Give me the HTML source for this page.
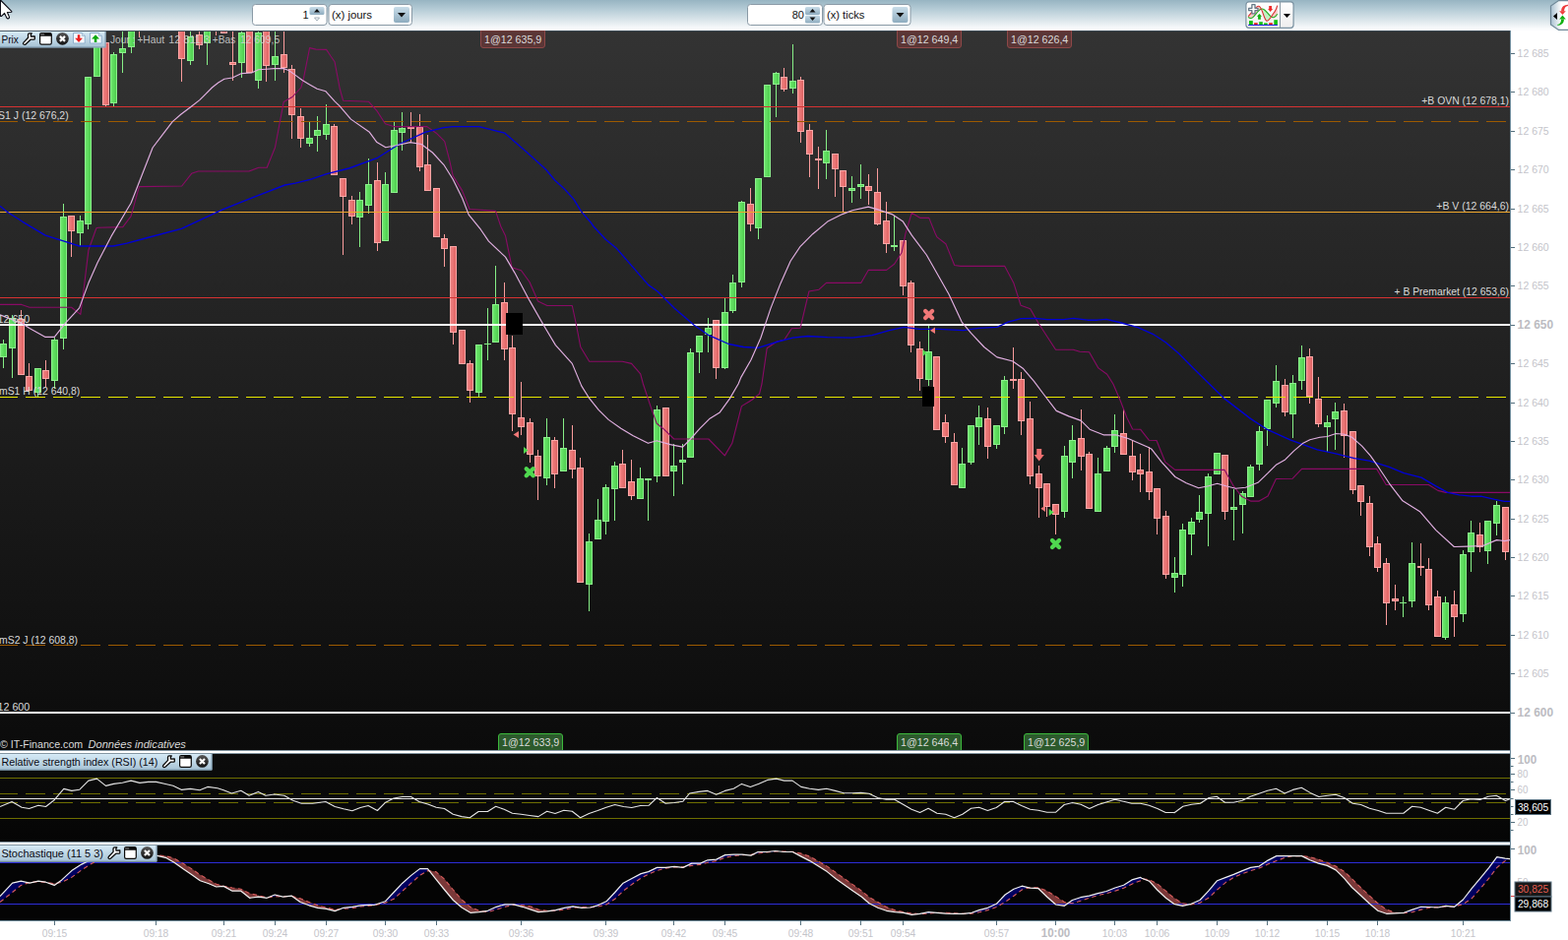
<!DOCTYPE html><html><head><meta charset="utf-8"><title>Chart</title><style>
html,body{margin:0;padding:0;background:#fff;}body{width:1593px;height:955px;overflow:hidden;position:relative;font-family:"Liberation Sans",Arial,sans-serif;}
svg{position:absolute;left:0;top:0;display:block}text{font-family:"Liberation Sans",Arial,sans-serif;font-size:11px}
.ax{fill:#c4c4ca}.axb{fill:#bcbcc2;font-weight:bold;font-size:12px}.lb{fill:#dadada}.hd{fill:#0a0a14}
</style></head><body>
<svg width="1593" height="955" viewBox="0 0 1593 955">
<defs>
<linearGradient id="tb" x1="0" y1="0" x2="0" y2="1"><stop offset="0" stop-color="#97b4c2"/><stop offset="0.33" stop-color="#b8ced8"/><stop offset="0.67" stop-color="#dce6eb"/><stop offset="0.95" stop-color="#fbfcfd"/></linearGradient>
<linearGradient id="bg" x1="0" y1="0" x2="0" y2="1"><stop offset="0" stop-color="#333333"/><stop offset="0.5" stop-color="#1f1f1f"/><stop offset="1" stop-color="#0b0b0b"/></linearGradient>
<linearGradient id="bg2" x1="0" y1="0" x2="0" y2="1"><stop offset="0" stop-color="#0c0c0c"/><stop offset="1" stop-color="#050505"/></linearGradient>
<linearGradient id="hdg" x1="0" y1="0" x2="0" y2="1"><stop offset="0" stop-color="#d6eaf6"/><stop offset="1" stop-color="#a6c2d4"/></linearGradient>
<linearGradient id="btn" x1="0" y1="0" x2="0" y2="1"><stop offset="0" stop-color="#c9dde9"/><stop offset="1" stop-color="#8eacbf"/></linearGradient>
<linearGradient id="gcan" x1="0" y1="0" x2="1" y2="0"><stop offset="0" stop-color="#6ee86e"/><stop offset="1" stop-color="#4ccc4c"/></linearGradient>
<linearGradient id="rcan" x1="0" y1="0" x2="1" y2="0"><stop offset="0" stop-color="#f28484"/><stop offset="1" stop-color="#de6262"/></linearGradient>
<linearGradient id="sph" x1="0" y1="0" x2="0" y2="1"><stop offset="0" stop-color="#5a5a5a"/><stop offset="0.5" stop-color="#303030"/><stop offset="1" stop-color="#141414"/></linearGradient>
<linearGradient id="wb" x1="0" y1="0" x2="0" y2="1"><stop offset="0" stop-color="#ffffff"/><stop offset="1" stop-color="#eeeeee"/></linearGradient>
<linearGradient id="tabg" x1="0" y1="0" x2="1" y2="0"><stop offset="0" stop-color="#a8c0d0"/><stop offset="0.5" stop-color="#ffffff"/><stop offset="1" stop-color="#ffffff"/></linearGradient>
<clipPath id="cp"><rect x="0" y="31" width="1534" height="731"/></clipPath>
<clipPath id="cp3"><rect x="0" y="859" width="1534" height="76"/></clipPath>
<g id="wrench"><path d="M0.8 10.4 L5.6 5.3 L5.5 2.3 Q5.6 0.9 6.9 0.8 L9.3 0.8 L8.4 1.9 L8.4 4 L12.3 3.9 L12.3 6.6 Q12.2 7.1 11.5 7.1 L8.3 7.1 L2.8 12.2 Q1.7 12.8 0.8 11.9 Q0.1 11.1 0.8 10.4 Z" fill="#fff" stroke="#0a0a0a" stroke-width="1.3" stroke-linejoin="round"/></g>
<g id="win"><rect x="0.6" y="0.6" width="11.7" height="11.6" rx="1.6" fill="#fff" stroke="#0a0a0a" stroke-width="1.2"/><path d="M0.6 3.7 V2 Q0.6 0.6 2 0.6 H10.9 Q12.3 0.6 12.3 2 V3.7 Z" fill="#0a0a0a"/><rect x="1.2" y="1" width="4" height="1.6" fill="#777" opacity="0.8"/></g>
<g id="xc"><circle cx="6.45" cy="6.35" r="6.35" fill="url(#sph)"/><path d="M3.9 3.9 L9 8.9 M9 3.9 L3.9 8.9" stroke="#fff" stroke-width="2.2" stroke-linecap="butt"/></g>
<g id="docd"><path d="M0.5 0.5 H9.3 L12.2 3.4 V11 H0.5 Z" fill="#f4f9fd" stroke="#8fb0cc" stroke-width="1"/><path d="M9.3 0.5 V3.4 H12.2" fill="#dbe8f2" stroke="#8fb0cc" stroke-width="0.8"/><path d="M4.8 2.2 H7.3 V5.8 H10 L6.05 10 L2.1 5.8 H4.8 Z" fill="#ee2020"/></g>
<g id="docu"><path d="M0.5 0.5 H9.3 L12.2 3.4 V11 H0.5 Z" fill="#f4f9fd" stroke="#8fb0cc" stroke-width="1"/><path d="M9.3 0.5 V3.4 H12.2" fill="#dbe8f2" stroke="#8fb0cc" stroke-width="0.8"/><path d="M4.8 10 H7.3 V6.4 H10 L6.05 2.2 L2.1 6.4 H4.8 Z" fill="#08a808"/></g>
<g id="xm"><path d="M-3.5 -3.5 L3.5 3.5 M3.5 -3.5 L-3.5 3.5" stroke-width="4.3" stroke-linecap="round" fill="none"/></g>
</defs>
<rect x="0" y="0" width="1593" height="31" fill="url(#tb)"/>
<rect x="0" y="31" width="1535" height="731" fill="url(#bg)"/>
<rect x="0" y="765" width="1535" height="91" fill="url(#bg2)"/>
<rect x="0" y="858" width="1535" height="77" fill="#040404"/>
<g clip-path="url(#cp)">
<rect x="3" y="345" width="1" height="4" fill="#86ee86"/>
<rect x="3" y="363" width="1" height="11" fill="#86ee86"/>
<rect x="0.5" y="349.5" width="6" height="13" fill="url(#gcan)" stroke="#8cf08c" stroke-width="1"/>
<rect x="12" y="320" width="1" height="3" fill="#86ee86"/>
<rect x="12" y="354" width="1" height="30" fill="#86ee86"/>
<rect x="9.5" y="323.5" width="6" height="30" fill="url(#gcan)" stroke="#8cf08c" stroke-width="1"/>
<rect x="21" y="315" width="1" height="9" fill="#fa9c9c"/>
<rect x="18.5" y="324.5" width="6" height="56" fill="url(#rcan)" stroke="#ffa6a6" stroke-width="1"/>
<rect x="29" y="369" width="1" height="13" fill="#fa9c9c"/>
<rect x="26.5" y="382.5" width="6" height="14" fill="url(#rcan)" stroke="#ffa6a6" stroke-width="1"/>
<rect x="38" y="399" width="1" height="4" fill="#86ee86"/>
<rect x="35.5" y="374.5" width="6" height="24" fill="url(#gcan)" stroke="#8cf08c" stroke-width="1"/>
<rect x="46" y="366" width="1" height="10" fill="#fa9c9c"/>
<rect x="46" y="385" width="1" height="8" fill="#fa9c9c"/>
<rect x="43.5" y="376.5" width="6" height="8" fill="url(#rcan)" stroke="#ffa6a6" stroke-width="1"/>
<rect x="55" y="343" width="1" height="2" fill="#86ee86"/>
<rect x="55" y="387" width="1" height="8" fill="#86ee86"/>
<rect x="52.5" y="345.5" width="6" height="41" fill="url(#gcan)" stroke="#8cf08c" stroke-width="1"/>
<rect x="64" y="207" width="1" height="13" fill="#86ee86"/>
<rect x="64" y="344" width="1" height="11" fill="#86ee86"/>
<rect x="61.5" y="220.5" width="6" height="123" fill="url(#gcan)" stroke="#8cf08c" stroke-width="1"/>
<rect x="72" y="235" width="1" height="26" fill="#fa9c9c"/>
<rect x="69.5" y="219.5" width="6" height="15" fill="url(#rcan)" stroke="#ffa6a6" stroke-width="1"/>
<rect x="81" y="219" width="1" height="5" fill="#86ee86"/>
<rect x="81" y="237" width="1" height="13" fill="#86ee86"/>
<rect x="78.5" y="224.5" width="6" height="12" fill="url(#gcan)" stroke="#8cf08c" stroke-width="1"/>
<rect x="89" y="228" width="1" height="5" fill="#86ee86"/>
<rect x="86.5" y="78.5" width="6" height="149" fill="url(#gcan)" stroke="#8cf08c" stroke-width="1"/>
<rect x="95.5" y="25.5" width="6" height="52" fill="url(#gcan)" stroke="#8cf08c" stroke-width="1"/>
<rect x="107" y="107" width="1" height="1" fill="#fa9c9c"/>
<rect x="104.5" y="43.5" width="6" height="63" fill="url(#rcan)" stroke="#ffa6a6" stroke-width="1"/>
<rect x="115" y="53" width="1" height="2" fill="#86ee86"/>
<rect x="115" y="105" width="1" height="3" fill="#86ee86"/>
<rect x="112.5" y="55.5" width="6" height="49" fill="url(#gcan)" stroke="#8cf08c" stroke-width="1"/>
<rect x="124" y="25" width="1" height="24" fill="#86ee86"/>
<rect x="124" y="54" width="1" height="20" fill="#86ee86"/>
<rect x="121.5" y="49.5" width="6" height="4" fill="url(#gcan)" stroke="#8cf08c" stroke-width="1"/>
<rect x="133" y="48" width="1" height="6" fill="#86ee86"/>
<rect x="130.5" y="25.5" width="6" height="22" fill="url(#gcan)" stroke="#8cf08c" stroke-width="1"/>
<rect x="141" y="25" width="1" height="13" fill="#fa9c9c"/>
<rect x="138.5" y="20.5" width="6" height="4" fill="url(#rcan)" stroke="#ffa6a6" stroke-width="1"/>
<rect x="184" y="60" width="1" height="23" fill="#fa9c9c"/>
<rect x="181.5" y="25.5" width="6" height="34" fill="url(#rcan)" stroke="#ffa6a6" stroke-width="1"/>
<rect x="193" y="25" width="1" height="12" fill="#86ee86"/>
<rect x="193" y="62" width="1" height="4" fill="#86ee86"/>
<rect x="190.5" y="37.5" width="6" height="24" fill="url(#gcan)" stroke="#8cf08c" stroke-width="1"/>
<rect x="202" y="25" width="1" height="10" fill="#fa9c9c"/>
<rect x="202" y="46" width="1" height="4" fill="#fa9c9c"/>
<rect x="199.5" y="35.5" width="6" height="10" fill="url(#rcan)" stroke="#ffa6a6" stroke-width="1"/>
<rect x="210" y="44" width="1" height="22" fill="#86ee86"/>
<rect x="207.5" y="25.5" width="6" height="18" fill="url(#gcan)" stroke="#8cf08c" stroke-width="1"/>
<rect x="219" y="25" width="1" height="11" fill="#fa9c9c"/>
<rect x="216.5" y="20.5" width="6" height="4" fill="url(#rcan)" stroke="#ffa6a6" stroke-width="1"/>
<rect x="227" y="25" width="1" height="6" fill="#fa9c9c"/>
<rect x="224.5" y="31.5" width="6" height="2" fill="url(#rcan)" stroke="#ffa6a6" stroke-width="1"/>
<rect x="236" y="25" width="1" height="38" fill="#fa9c9c"/>
<rect x="236" y="66" width="1" height="16" fill="#fa9c9c"/>
<rect x="233.5" y="63.5" width="6" height="2" fill="url(#rcan)" stroke="#ffa6a6" stroke-width="1"/>
<rect x="245" y="25" width="1" height="8" fill="#86ee86"/>
<rect x="245" y="64" width="1" height="15" fill="#86ee86"/>
<rect x="242.5" y="33.5" width="6" height="30" fill="url(#gcan)" stroke="#8cf08c" stroke-width="1"/>
<rect x="250.5" y="25.5" width="6" height="48" fill="url(#rcan)" stroke="#ffa6a6" stroke-width="1"/>
<rect x="262" y="25" width="1" height="8" fill="#86ee86"/>
<rect x="262" y="82" width="1" height="8" fill="#86ee86"/>
<rect x="259.5" y="33.5" width="6" height="48" fill="url(#gcan)" stroke="#8cf08c" stroke-width="1"/>
<rect x="270" y="67" width="1" height="16" fill="#fa9c9c"/>
<rect x="267.5" y="25.5" width="6" height="41" fill="url(#rcan)" stroke="#ffa6a6" stroke-width="1"/>
<rect x="279" y="25" width="1" height="32" fill="#86ee86"/>
<rect x="279" y="66" width="1" height="16" fill="#86ee86"/>
<rect x="276.5" y="57.5" width="6" height="8" fill="url(#gcan)" stroke="#8cf08c" stroke-width="1"/>
<rect x="288" y="25" width="1" height="30" fill="#fa9c9c"/>
<rect x="288" y="69" width="1" height="5" fill="#fa9c9c"/>
<rect x="285.5" y="55.5" width="6" height="13" fill="url(#rcan)" stroke="#ffa6a6" stroke-width="1"/>
<rect x="296" y="66" width="1" height="4" fill="#fa9c9c"/>
<rect x="296" y="117" width="1" height="24" fill="#fa9c9c"/>
<rect x="293.5" y="70.5" width="6" height="46" fill="url(#rcan)" stroke="#ffa6a6" stroke-width="1"/>
<rect x="305" y="110" width="1" height="8" fill="#fa9c9c"/>
<rect x="305" y="141" width="1" height="9" fill="#fa9c9c"/>
<rect x="302.5" y="118.5" width="6" height="22" fill="url(#rcan)" stroke="#ffa6a6" stroke-width="1"/>
<rect x="314" y="124" width="1" height="16" fill="#86ee86"/>
<rect x="314" y="146" width="1" height="3" fill="#86ee86"/>
<rect x="311.5" y="140.5" width="6" height="5" fill="url(#gcan)" stroke="#8cf08c" stroke-width="1"/>
<rect x="322" y="118" width="1" height="14" fill="#86ee86"/>
<rect x="322" y="138" width="1" height="16" fill="#86ee86"/>
<rect x="319.5" y="132.5" width="6" height="5" fill="url(#gcan)" stroke="#8cf08c" stroke-width="1"/>
<rect x="331" y="106" width="1" height="20" fill="#86ee86"/>
<rect x="331" y="137" width="1" height="5" fill="#86ee86"/>
<rect x="328.5" y="126.5" width="6" height="10" fill="url(#gcan)" stroke="#8cf08c" stroke-width="1"/>
<rect x="339" y="126" width="1" height="2" fill="#fa9c9c"/>
<rect x="336.5" y="128.5" width="6" height="49" fill="url(#rcan)" stroke="#ffa6a6" stroke-width="1"/>
<rect x="348" y="200" width="1" height="59" fill="#fa9c9c"/>
<rect x="345.5" y="181.5" width="6" height="18" fill="url(#rcan)" stroke="#ffa6a6" stroke-width="1"/>
<rect x="357" y="199" width="1" height="4" fill="#fa9c9c"/>
<rect x="357" y="220" width="1" height="8" fill="#fa9c9c"/>
<rect x="354.5" y="203.5" width="6" height="16" fill="url(#rcan)" stroke="#ffa6a6" stroke-width="1"/>
<rect x="365" y="195" width="1" height="8" fill="#86ee86"/>
<rect x="365" y="221" width="1" height="30" fill="#86ee86"/>
<rect x="362.5" y="203.5" width="6" height="17" fill="url(#gcan)" stroke="#8cf08c" stroke-width="1"/>
<rect x="374" y="161" width="1" height="26" fill="#86ee86"/>
<rect x="374" y="209" width="1" height="8" fill="#86ee86"/>
<rect x="371.5" y="187.5" width="6" height="21" fill="url(#gcan)" stroke="#8cf08c" stroke-width="1"/>
<rect x="383" y="165" width="1" height="18" fill="#fa9c9c"/>
<rect x="383" y="247" width="1" height="8" fill="#fa9c9c"/>
<rect x="380.5" y="183.5" width="6" height="63" fill="url(#rcan)" stroke="#ffa6a6" stroke-width="1"/>
<rect x="391" y="175" width="1" height="12" fill="#86ee86"/>
<rect x="388.5" y="187.5" width="6" height="57" fill="url(#gcan)" stroke="#8cf08c" stroke-width="1"/>
<rect x="400" y="124" width="1" height="8" fill="#86ee86"/>
<rect x="397.5" y="132.5" width="6" height="63" fill="url(#gcan)" stroke="#8cf08c" stroke-width="1"/>
<rect x="408" y="114" width="1" height="16" fill="#86ee86"/>
<rect x="408" y="135" width="1" height="18" fill="#86ee86"/>
<rect x="405.5" y="130.5" width="6" height="4" fill="url(#gcan)" stroke="#8cf08c" stroke-width="1"/>
<rect x="417" y="114" width="1" height="15" fill="#fa9c9c"/>
<rect x="417" y="131" width="1" height="14" fill="#fa9c9c"/>
<rect x="414" y="129" width="7" height="2" fill="#fa9c9c"/>
<rect x="426" y="116" width="1" height="13" fill="#fa9c9c"/>
<rect x="426" y="170" width="1" height="4" fill="#fa9c9c"/>
<rect x="423.5" y="129.5" width="6" height="40" fill="url(#rcan)" stroke="#ffa6a6" stroke-width="1"/>
<rect x="434" y="137" width="1" height="30" fill="#fa9c9c"/>
<rect x="431.5" y="167.5" width="6" height="26" fill="url(#rcan)" stroke="#ffa6a6" stroke-width="1"/>
<rect x="440.5" y="191.5" width="6" height="49" fill="url(#rcan)" stroke="#ffa6a6" stroke-width="1"/>
<rect x="451" y="238" width="1" height="4" fill="#fa9c9c"/>
<rect x="451" y="253" width="1" height="18" fill="#fa9c9c"/>
<rect x="448.5" y="242.5" width="6" height="10" fill="url(#rcan)" stroke="#ffa6a6" stroke-width="1"/>
<rect x="460" y="338" width="1" height="12" fill="#fa9c9c"/>
<rect x="457.5" y="250.5" width="6" height="87" fill="url(#rcan)" stroke="#ffa6a6" stroke-width="1"/>
<rect x="466.5" y="335.5" width="6" height="34" fill="url(#rcan)" stroke="#ffa6a6" stroke-width="1"/>
<rect x="477" y="366" width="1" height="3" fill="#fa9c9c"/>
<rect x="477" y="397" width="1" height="12" fill="#fa9c9c"/>
<rect x="474.5" y="369.5" width="6" height="27" fill="url(#rcan)" stroke="#ffa6a6" stroke-width="1"/>
<rect x="486" y="399" width="1" height="4" fill="#86ee86"/>
<rect x="483.5" y="350.5" width="6" height="48" fill="url(#gcan)" stroke="#8cf08c" stroke-width="1"/>
<rect x="495" y="313" width="1" height="36" fill="#86ee86"/>
<rect x="495" y="350" width="1" height="16" fill="#86ee86"/>
<rect x="492" y="349" width="7" height="1" fill="#86ee86"/>
<rect x="503" y="270" width="1" height="39" fill="#86ee86"/>
<rect x="500.5" y="309.5" width="6" height="38" fill="url(#gcan)" stroke="#8cf08c" stroke-width="1"/>
<rect x="512" y="287" width="1" height="20" fill="#fa9c9c"/>
<rect x="512" y="355" width="1" height="11" fill="#fa9c9c"/>
<rect x="509.5" y="307.5" width="6" height="47" fill="url(#rcan)" stroke="#ffa6a6" stroke-width="1"/>
<rect x="520" y="341" width="1" height="12" fill="#fa9c9c"/>
<rect x="520" y="421" width="1" height="17" fill="#fa9c9c"/>
<rect x="517.5" y="353.5" width="6" height="67" fill="url(#rcan)" stroke="#ffa6a6" stroke-width="1"/>
<rect x="529" y="388" width="1" height="36" fill="#fa9c9c"/>
<rect x="529" y="434" width="1" height="8" fill="#fa9c9c"/>
<rect x="526.5" y="424.5" width="6" height="9" fill="url(#rcan)" stroke="#ffa6a6" stroke-width="1"/>
<rect x="538" y="425" width="1" height="4" fill="#fa9c9c"/>
<rect x="538" y="462" width="1" height="8" fill="#fa9c9c"/>
<rect x="535.5" y="429.5" width="6" height="32" fill="url(#rcan)" stroke="#ffa6a6" stroke-width="1"/>
<rect x="546" y="457" width="1" height="6" fill="#fa9c9c"/>
<rect x="546" y="484" width="1" height="24" fill="#fa9c9c"/>
<rect x="543.5" y="463.5" width="6" height="20" fill="url(#rcan)" stroke="#ffa6a6" stroke-width="1"/>
<rect x="555" y="425" width="1" height="19" fill="#86ee86"/>
<rect x="555" y="486" width="1" height="7" fill="#86ee86"/>
<rect x="552.5" y="444.5" width="6" height="41" fill="url(#gcan)" stroke="#8cf08c" stroke-width="1"/>
<rect x="563" y="444" width="1" height="3" fill="#fa9c9c"/>
<rect x="563" y="482" width="1" height="14" fill="#fa9c9c"/>
<rect x="560.5" y="447.5" width="6" height="34" fill="url(#rcan)" stroke="#ffa6a6" stroke-width="1"/>
<rect x="572" y="425" width="1" height="30" fill="#86ee86"/>
<rect x="569.5" y="455.5" width="6" height="23" fill="url(#gcan)" stroke="#8cf08c" stroke-width="1"/>
<rect x="581" y="432" width="1" height="25" fill="#fa9c9c"/>
<rect x="581" y="477" width="1" height="9" fill="#fa9c9c"/>
<rect x="578.5" y="457.5" width="6" height="19" fill="url(#rcan)" stroke="#ffa6a6" stroke-width="1"/>
<rect x="589" y="465" width="1" height="10" fill="#fa9c9c"/>
<rect x="586.5" y="475.5" width="6" height="116" fill="url(#rcan)" stroke="#ffa6a6" stroke-width="1"/>
<rect x="598" y="542" width="1" height="8" fill="#86ee86"/>
<rect x="598" y="594" width="1" height="27" fill="#86ee86"/>
<rect x="595.5" y="550.5" width="6" height="43" fill="url(#gcan)" stroke="#8cf08c" stroke-width="1"/>
<rect x="607" y="507" width="1" height="21" fill="#86ee86"/>
<rect x="604.5" y="528.5" width="6" height="19" fill="url(#gcan)" stroke="#8cf08c" stroke-width="1"/>
<rect x="615" y="492" width="1" height="3" fill="#86ee86"/>
<rect x="615" y="530" width="1" height="13" fill="#86ee86"/>
<rect x="612.5" y="495.5" width="6" height="34" fill="url(#gcan)" stroke="#8cf08c" stroke-width="1"/>
<rect x="624" y="469" width="1" height="4" fill="#86ee86"/>
<rect x="624" y="497" width="1" height="32" fill="#86ee86"/>
<rect x="621.5" y="473.5" width="6" height="23" fill="url(#gcan)" stroke="#8cf08c" stroke-width="1"/>
<rect x="632" y="457" width="1" height="14" fill="#fa9c9c"/>
<rect x="629.5" y="471.5" width="6" height="24" fill="url(#rcan)" stroke="#ffa6a6" stroke-width="1"/>
<rect x="641" y="467" width="1" height="22" fill="#fa9c9c"/>
<rect x="641" y="504" width="1" height="4" fill="#fa9c9c"/>
<rect x="638.5" y="489.5" width="6" height="14" fill="url(#rcan)" stroke="#ffa6a6" stroke-width="1"/>
<rect x="650" y="475" width="1" height="11" fill="#86ee86"/>
<rect x="647.5" y="486.5" width="6" height="20" fill="url(#gcan)" stroke="#8cf08c" stroke-width="1"/>
<rect x="658" y="488" width="1" height="41" fill="#86ee86"/>
<rect x="655" y="486" width="7" height="2" fill="#86ee86"/>
<rect x="667" y="412" width="1" height="4" fill="#86ee86"/>
<rect x="667" y="484" width="1" height="6" fill="#86ee86"/>
<rect x="664.5" y="416.5" width="6" height="67" fill="url(#gcan)" stroke="#8cf08c" stroke-width="1"/>
<rect x="673.5" y="414.5" width="6" height="69" fill="url(#rcan)" stroke="#ffa6a6" stroke-width="1"/>
<rect x="684" y="451" width="1" height="22" fill="#86ee86"/>
<rect x="684" y="479" width="1" height="25" fill="#86ee86"/>
<rect x="681.5" y="473.5" width="6" height="5" fill="url(#gcan)" stroke="#8cf08c" stroke-width="1"/>
<rect x="693" y="451" width="1" height="16" fill="#86ee86"/>
<rect x="693" y="470" width="1" height="22" fill="#86ee86"/>
<rect x="690.5" y="467.5" width="6" height="2" fill="url(#gcan)" stroke="#8cf08c" stroke-width="1"/>
<rect x="701" y="354" width="1" height="4" fill="#86ee86"/>
<rect x="698.5" y="358.5" width="6" height="106" fill="url(#gcan)" stroke="#8cf08c" stroke-width="1"/>
<rect x="710" y="358" width="1" height="21" fill="#86ee86"/>
<rect x="707.5" y="341.5" width="6" height="16" fill="url(#gcan)" stroke="#8cf08c" stroke-width="1"/>
<rect x="719" y="323" width="1" height="10" fill="#86ee86"/>
<rect x="719" y="340" width="1" height="18" fill="#86ee86"/>
<rect x="716.5" y="333.5" width="6" height="6" fill="url(#gcan)" stroke="#8cf08c" stroke-width="1"/>
<rect x="727" y="374" width="1" height="11" fill="#fa9c9c"/>
<rect x="724.5" y="325.5" width="6" height="48" fill="url(#rcan)" stroke="#ffa6a6" stroke-width="1"/>
<rect x="736" y="303" width="1" height="14" fill="#86ee86"/>
<rect x="736" y="374" width="1" height="1" fill="#86ee86"/>
<rect x="733.5" y="317.5" width="6" height="56" fill="url(#gcan)" stroke="#8cf08c" stroke-width="1"/>
<rect x="744" y="279" width="1" height="8" fill="#86ee86"/>
<rect x="744" y="316" width="1" height="2" fill="#86ee86"/>
<rect x="741.5" y="287.5" width="6" height="28" fill="url(#gcan)" stroke="#8cf08c" stroke-width="1"/>
<rect x="753" y="204" width="1" height="1" fill="#86ee86"/>
<rect x="753" y="287" width="1" height="5" fill="#86ee86"/>
<rect x="750.5" y="205.5" width="6" height="81" fill="url(#gcan)" stroke="#8cf08c" stroke-width="1"/>
<rect x="762" y="191" width="1" height="16" fill="#fa9c9c"/>
<rect x="762" y="228" width="1" height="7" fill="#fa9c9c"/>
<rect x="759.5" y="207.5" width="6" height="20" fill="url(#rcan)" stroke="#ffa6a6" stroke-width="1"/>
<rect x="770" y="232" width="1" height="11" fill="#86ee86"/>
<rect x="767.5" y="181.5" width="6" height="50" fill="url(#gcan)" stroke="#8cf08c" stroke-width="1"/>
<rect x="776.5" y="86.5" width="6" height="93" fill="url(#gcan)" stroke="#8cf08c" stroke-width="1"/>
<rect x="788" y="73" width="1" height="1" fill="#86ee86"/>
<rect x="788" y="86" width="1" height="33" fill="#86ee86"/>
<rect x="785.5" y="74.5" width="6" height="11" fill="url(#gcan)" stroke="#8cf08c" stroke-width="1"/>
<rect x="796" y="69" width="1" height="9" fill="#fa9c9c"/>
<rect x="796" y="91" width="1" height="2" fill="#fa9c9c"/>
<rect x="793.5" y="78.5" width="6" height="12" fill="url(#rcan)" stroke="#ffa6a6" stroke-width="1"/>
<rect x="805" y="45" width="1" height="37" fill="#86ee86"/>
<rect x="805" y="90" width="1" height="5" fill="#86ee86"/>
<rect x="802.5" y="82.5" width="6" height="7" fill="url(#gcan)" stroke="#8cf08c" stroke-width="1"/>
<rect x="813" y="78" width="1" height="3" fill="#fa9c9c"/>
<rect x="813" y="134" width="1" height="11" fill="#fa9c9c"/>
<rect x="810.5" y="81.5" width="6" height="52" fill="url(#rcan)" stroke="#ffa6a6" stroke-width="1"/>
<rect x="822" y="126" width="1" height="6" fill="#fa9c9c"/>
<rect x="822" y="157" width="1" height="23" fill="#fa9c9c"/>
<rect x="819.5" y="132.5" width="6" height="24" fill="url(#rcan)" stroke="#ffa6a6" stroke-width="1"/>
<rect x="831" y="149" width="1" height="12" fill="#fa9c9c"/>
<rect x="831" y="163" width="1" height="29" fill="#fa9c9c"/>
<rect x="828" y="161" width="7" height="2" fill="#fa9c9c"/>
<rect x="839" y="132" width="1" height="21" fill="#86ee86"/>
<rect x="839" y="166" width="1" height="16" fill="#86ee86"/>
<rect x="836.5" y="153.5" width="6" height="12" fill="url(#gcan)" stroke="#8cf08c" stroke-width="1"/>
<rect x="848" y="172" width="1" height="28" fill="#fa9c9c"/>
<rect x="845.5" y="156.5" width="6" height="15" fill="url(#rcan)" stroke="#ffa6a6" stroke-width="1"/>
<rect x="856" y="190" width="1" height="25" fill="#fa9c9c"/>
<rect x="853.5" y="173.5" width="6" height="16" fill="url(#rcan)" stroke="#ffa6a6" stroke-width="1"/>
<rect x="865" y="179" width="1" height="12" fill="#86ee86"/>
<rect x="865" y="194" width="1" height="12" fill="#86ee86"/>
<rect x="862.5" y="191.5" width="6" height="2" fill="url(#gcan)" stroke="#8cf08c" stroke-width="1"/>
<rect x="874" y="167" width="1" height="20" fill="#86ee86"/>
<rect x="874" y="190" width="1" height="12" fill="#86ee86"/>
<rect x="871.5" y="187.5" width="6" height="2" fill="url(#gcan)" stroke="#8cf08c" stroke-width="1"/>
<rect x="882" y="177" width="1" height="12" fill="#fa9c9c"/>
<rect x="882" y="194" width="1" height="14" fill="#fa9c9c"/>
<rect x="879.5" y="189.5" width="6" height="4" fill="url(#rcan)" stroke="#ffa6a6" stroke-width="1"/>
<rect x="891" y="171" width="1" height="24" fill="#fa9c9c"/>
<rect x="891" y="228" width="1" height="1" fill="#fa9c9c"/>
<rect x="888.5" y="195.5" width="6" height="32" fill="url(#rcan)" stroke="#ffa6a6" stroke-width="1"/>
<rect x="900" y="205" width="1" height="19" fill="#fa9c9c"/>
<rect x="900" y="248" width="1" height="9" fill="#fa9c9c"/>
<rect x="897.5" y="224.5" width="6" height="23" fill="url(#rcan)" stroke="#ffa6a6" stroke-width="1"/>
<rect x="908" y="219" width="1" height="30" fill="#86ee86"/>
<rect x="908" y="251" width="1" height="4" fill="#86ee86"/>
<rect x="905" y="249" width="7" height="2" fill="#86ee86"/>
<rect x="917" y="291" width="1" height="9" fill="#fa9c9c"/>
<rect x="914.5" y="244.5" width="6" height="46" fill="url(#rcan)" stroke="#ffa6a6" stroke-width="1"/>
<rect x="925" y="285" width="1" height="2" fill="#fa9c9c"/>
<rect x="925" y="351" width="1" height="7" fill="#fa9c9c"/>
<rect x="922.5" y="287.5" width="6" height="63" fill="url(#rcan)" stroke="#ffa6a6" stroke-width="1"/>
<rect x="934" y="347" width="1" height="7" fill="#fa9c9c"/>
<rect x="934" y="385" width="1" height="12" fill="#fa9c9c"/>
<rect x="931.5" y="354.5" width="6" height="30" fill="url(#rcan)" stroke="#ffa6a6" stroke-width="1"/>
<rect x="943" y="331" width="1" height="26" fill="#86ee86"/>
<rect x="943" y="386" width="1" height="6" fill="#86ee86"/>
<rect x="940.5" y="357.5" width="6" height="28" fill="url(#gcan)" stroke="#8cf08c" stroke-width="1"/>
<rect x="948.5" y="362.5" width="6" height="74" fill="url(#rcan)" stroke="#ffa6a6" stroke-width="1"/>
<rect x="960" y="421" width="1" height="8" fill="#fa9c9c"/>
<rect x="960" y="444" width="1" height="6" fill="#fa9c9c"/>
<rect x="957.5" y="429.5" width="6" height="14" fill="url(#rcan)" stroke="#ffa6a6" stroke-width="1"/>
<rect x="969" y="440" width="1" height="9" fill="#fa9c9c"/>
<rect x="966.5" y="449.5" width="6" height="43" fill="url(#rcan)" stroke="#ffa6a6" stroke-width="1"/>
<rect x="977" y="455" width="1" height="16" fill="#86ee86"/>
<rect x="974.5" y="471.5" width="6" height="24" fill="url(#gcan)" stroke="#8cf08c" stroke-width="1"/>
<rect x="986" y="470" width="1" height="2" fill="#86ee86"/>
<rect x="983.5" y="432.5" width="6" height="37" fill="url(#gcan)" stroke="#8cf08c" stroke-width="1"/>
<rect x="994" y="412" width="1" height="12" fill="#86ee86"/>
<rect x="994" y="434" width="1" height="18" fill="#86ee86"/>
<rect x="991.5" y="424.5" width="6" height="9" fill="url(#gcan)" stroke="#8cf08c" stroke-width="1"/>
<rect x="1003" y="414" width="1" height="11" fill="#fa9c9c"/>
<rect x="1003" y="454" width="1" height="12" fill="#fa9c9c"/>
<rect x="1000.5" y="425.5" width="6" height="28" fill="url(#rcan)" stroke="#ffa6a6" stroke-width="1"/>
<rect x="1012" y="452" width="1" height="4" fill="#86ee86"/>
<rect x="1009.5" y="432.5" width="6" height="19" fill="url(#gcan)" stroke="#8cf08c" stroke-width="1"/>
<rect x="1020" y="382" width="1" height="4" fill="#86ee86"/>
<rect x="1020" y="434" width="1" height="7" fill="#86ee86"/>
<rect x="1017.5" y="386.5" width="6" height="47" fill="url(#gcan)" stroke="#8cf08c" stroke-width="1"/>
<rect x="1029" y="353" width="1" height="32" fill="#fa9c9c"/>
<rect x="1029" y="387" width="1" height="8" fill="#fa9c9c"/>
<rect x="1026" y="385" width="7" height="2" fill="#fa9c9c"/>
<rect x="1037" y="378" width="1" height="7" fill="#fa9c9c"/>
<rect x="1037" y="428" width="1" height="14" fill="#fa9c9c"/>
<rect x="1034.5" y="385.5" width="6" height="42" fill="url(#rcan)" stroke="#ffa6a6" stroke-width="1"/>
<rect x="1046" y="408" width="1" height="17" fill="#fa9c9c"/>
<rect x="1046" y="484" width="1" height="8" fill="#fa9c9c"/>
<rect x="1043.5" y="425.5" width="6" height="58" fill="url(#rcan)" stroke="#ffa6a6" stroke-width="1"/>
<rect x="1055" y="473" width="1" height="8" fill="#fa9c9c"/>
<rect x="1055" y="496" width="1" height="30" fill="#fa9c9c"/>
<rect x="1052.5" y="481.5" width="6" height="14" fill="url(#rcan)" stroke="#ffa6a6" stroke-width="1"/>
<rect x="1063" y="515" width="1" height="10" fill="#fa9c9c"/>
<rect x="1060.5" y="491.5" width="6" height="23" fill="url(#rcan)" stroke="#ffa6a6" stroke-width="1"/>
<rect x="1072" y="523" width="1" height="20" fill="#fa9c9c"/>
<rect x="1069.5" y="512.5" width="6" height="10" fill="url(#rcan)" stroke="#ffa6a6" stroke-width="1"/>
<rect x="1081" y="453" width="1" height="10" fill="#86ee86"/>
<rect x="1081" y="520" width="1" height="6" fill="#86ee86"/>
<rect x="1078.5" y="463.5" width="6" height="56" fill="url(#gcan)" stroke="#8cf08c" stroke-width="1"/>
<rect x="1089" y="432" width="1" height="15" fill="#86ee86"/>
<rect x="1089" y="470" width="1" height="16" fill="#86ee86"/>
<rect x="1086.5" y="447.5" width="6" height="22" fill="url(#gcan)" stroke="#8cf08c" stroke-width="1"/>
<rect x="1098" y="416" width="1" height="29" fill="#fa9c9c"/>
<rect x="1098" y="464" width="1" height="14" fill="#fa9c9c"/>
<rect x="1095.5" y="445.5" width="6" height="18" fill="url(#rcan)" stroke="#ffa6a6" stroke-width="1"/>
<rect x="1106" y="459" width="1" height="2" fill="#fa9c9c"/>
<rect x="1103.5" y="461.5" width="6" height="55" fill="url(#rcan)" stroke="#ffa6a6" stroke-width="1"/>
<rect x="1115" y="465" width="1" height="16" fill="#86ee86"/>
<rect x="1112.5" y="481.5" width="6" height="38" fill="url(#gcan)" stroke="#8cf08c" stroke-width="1"/>
<rect x="1124" y="453" width="1" height="2" fill="#86ee86"/>
<rect x="1121.5" y="455.5" width="6" height="23" fill="url(#gcan)" stroke="#8cf08c" stroke-width="1"/>
<rect x="1132" y="421" width="1" height="16" fill="#86ee86"/>
<rect x="1132" y="454" width="1" height="6" fill="#86ee86"/>
<rect x="1129.5" y="437.5" width="6" height="16" fill="url(#gcan)" stroke="#8cf08c" stroke-width="1"/>
<rect x="1141" y="416" width="1" height="24" fill="#fa9c9c"/>
<rect x="1138.5" y="440.5" width="6" height="21" fill="url(#rcan)" stroke="#ffa6a6" stroke-width="1"/>
<rect x="1150" y="448" width="1" height="15" fill="#fa9c9c"/>
<rect x="1150" y="480" width="1" height="8" fill="#fa9c9c"/>
<rect x="1147.5" y="463.5" width="6" height="16" fill="url(#rcan)" stroke="#ffa6a6" stroke-width="1"/>
<rect x="1158" y="461" width="1" height="16" fill="#fa9c9c"/>
<rect x="1158" y="482" width="1" height="18" fill="#fa9c9c"/>
<rect x="1155.5" y="477.5" width="6" height="4" fill="url(#rcan)" stroke="#ffa6a6" stroke-width="1"/>
<rect x="1167" y="454" width="1" height="25" fill="#fa9c9c"/>
<rect x="1167" y="500" width="1" height="8" fill="#fa9c9c"/>
<rect x="1164.5" y="479.5" width="6" height="20" fill="url(#rcan)" stroke="#ffa6a6" stroke-width="1"/>
<rect x="1175" y="527" width="1" height="16" fill="#fa9c9c"/>
<rect x="1172.5" y="496.5" width="6" height="30" fill="url(#rcan)" stroke="#ffa6a6" stroke-width="1"/>
<rect x="1184" y="519" width="1" height="5" fill="#fa9c9c"/>
<rect x="1184" y="584" width="1" height="4" fill="#fa9c9c"/>
<rect x="1181.5" y="524.5" width="6" height="59" fill="url(#rcan)" stroke="#ffa6a6" stroke-width="1"/>
<rect x="1193" y="566" width="1" height="16" fill="#86ee86"/>
<rect x="1193" y="587" width="1" height="15" fill="#86ee86"/>
<rect x="1190.5" y="582.5" width="6" height="4" fill="url(#gcan)" stroke="#8cf08c" stroke-width="1"/>
<rect x="1201" y="532" width="1" height="6" fill="#86ee86"/>
<rect x="1201" y="584" width="1" height="12" fill="#86ee86"/>
<rect x="1198.5" y="538.5" width="6" height="45" fill="url(#gcan)" stroke="#8cf08c" stroke-width="1"/>
<rect x="1210" y="526" width="1" height="4" fill="#86ee86"/>
<rect x="1210" y="543" width="1" height="21" fill="#86ee86"/>
<rect x="1207.5" y="530.5" width="6" height="12" fill="url(#gcan)" stroke="#8cf08c" stroke-width="1"/>
<rect x="1218" y="503" width="1" height="17" fill="#86ee86"/>
<rect x="1218" y="528" width="1" height="3" fill="#86ee86"/>
<rect x="1215.5" y="520.5" width="6" height="7" fill="url(#gcan)" stroke="#8cf08c" stroke-width="1"/>
<rect x="1227" y="481" width="1" height="3" fill="#86ee86"/>
<rect x="1227" y="522" width="1" height="33" fill="#86ee86"/>
<rect x="1224.5" y="484.5" width="6" height="37" fill="url(#gcan)" stroke="#8cf08c" stroke-width="1"/>
<rect x="1233.5" y="460.5" width="6" height="21" fill="url(#gcan)" stroke="#8cf08c" stroke-width="1"/>
<rect x="1244" y="520" width="1" height="8" fill="#fa9c9c"/>
<rect x="1241.5" y="462.5" width="6" height="57" fill="url(#rcan)" stroke="#ffa6a6" stroke-width="1"/>
<rect x="1253" y="497" width="1" height="18" fill="#86ee86"/>
<rect x="1253" y="518" width="1" height="31" fill="#86ee86"/>
<rect x="1250.5" y="515.5" width="6" height="2" fill="url(#gcan)" stroke="#8cf08c" stroke-width="1"/>
<rect x="1262" y="499" width="1" height="2" fill="#86ee86"/>
<rect x="1262" y="513" width="1" height="29" fill="#86ee86"/>
<rect x="1259.5" y="501.5" width="6" height="11" fill="url(#gcan)" stroke="#8cf08c" stroke-width="1"/>
<rect x="1270" y="472" width="1" height="2" fill="#86ee86"/>
<rect x="1267.5" y="474.5" width="6" height="30" fill="url(#gcan)" stroke="#8cf08c" stroke-width="1"/>
<rect x="1279" y="433" width="1" height="5" fill="#86ee86"/>
<rect x="1279" y="472" width="1" height="6" fill="#86ee86"/>
<rect x="1276.5" y="438.5" width="6" height="33" fill="url(#gcan)" stroke="#8cf08c" stroke-width="1"/>
<rect x="1287" y="436" width="1" height="17" fill="#86ee86"/>
<rect x="1284.5" y="406.5" width="6" height="29" fill="url(#gcan)" stroke="#8cf08c" stroke-width="1"/>
<rect x="1296" y="371" width="1" height="16" fill="#86ee86"/>
<rect x="1296" y="410" width="1" height="4" fill="#86ee86"/>
<rect x="1293.5" y="387.5" width="6" height="22" fill="url(#gcan)" stroke="#8cf08c" stroke-width="1"/>
<rect x="1305" y="385" width="1" height="6" fill="#fa9c9c"/>
<rect x="1305" y="419" width="1" height="4" fill="#fa9c9c"/>
<rect x="1302.5" y="391.5" width="6" height="27" fill="url(#rcan)" stroke="#ffa6a6" stroke-width="1"/>
<rect x="1313" y="381" width="1" height="8" fill="#86ee86"/>
<rect x="1313" y="421" width="1" height="24" fill="#86ee86"/>
<rect x="1310.5" y="389.5" width="6" height="31" fill="url(#gcan)" stroke="#8cf08c" stroke-width="1"/>
<rect x="1322" y="351" width="1" height="12" fill="#86ee86"/>
<rect x="1322" y="387" width="1" height="9" fill="#86ee86"/>
<rect x="1319.5" y="363.5" width="6" height="23" fill="url(#gcan)" stroke="#8cf08c" stroke-width="1"/>
<rect x="1330" y="354" width="1" height="8" fill="#fa9c9c"/>
<rect x="1330" y="403" width="1" height="7" fill="#fa9c9c"/>
<rect x="1327.5" y="362.5" width="6" height="40" fill="url(#rcan)" stroke="#ffa6a6" stroke-width="1"/>
<rect x="1339" y="383" width="1" height="22" fill="#fa9c9c"/>
<rect x="1339" y="431" width="1" height="3" fill="#fa9c9c"/>
<rect x="1336.5" y="405.5" width="6" height="25" fill="url(#rcan)" stroke="#ffa6a6" stroke-width="1"/>
<rect x="1348" y="422" width="1" height="7" fill="#86ee86"/>
<rect x="1348" y="434" width="1" height="25" fill="#86ee86"/>
<rect x="1345.5" y="429.5" width="6" height="4" fill="url(#gcan)" stroke="#8cf08c" stroke-width="1"/>
<rect x="1356" y="409" width="1" height="9" fill="#86ee86"/>
<rect x="1356" y="426" width="1" height="31" fill="#86ee86"/>
<rect x="1353.5" y="418.5" width="6" height="7" fill="url(#gcan)" stroke="#8cf08c" stroke-width="1"/>
<rect x="1365" y="410" width="1" height="7" fill="#fa9c9c"/>
<rect x="1365" y="443" width="1" height="22" fill="#fa9c9c"/>
<rect x="1362.5" y="417.5" width="6" height="25" fill="url(#rcan)" stroke="#ffa6a6" stroke-width="1"/>
<rect x="1374" y="498" width="1" height="4" fill="#fa9c9c"/>
<rect x="1371.5" y="438.5" width="6" height="59" fill="url(#rcan)" stroke="#ffa6a6" stroke-width="1"/>
<rect x="1382" y="510" width="1" height="14" fill="#fa9c9c"/>
<rect x="1379.5" y="493.5" width="6" height="16" fill="url(#rcan)" stroke="#ffa6a6" stroke-width="1"/>
<rect x="1391" y="504" width="1" height="7" fill="#fa9c9c"/>
<rect x="1391" y="556" width="1" height="9" fill="#fa9c9c"/>
<rect x="1388.5" y="511.5" width="6" height="44" fill="url(#rcan)" stroke="#ffa6a6" stroke-width="1"/>
<rect x="1399" y="545" width="1" height="7" fill="#fa9c9c"/>
<rect x="1399" y="577" width="1" height="4" fill="#fa9c9c"/>
<rect x="1396.5" y="552.5" width="6" height="24" fill="url(#rcan)" stroke="#ffa6a6" stroke-width="1"/>
<rect x="1408" y="567" width="1" height="5" fill="#fa9c9c"/>
<rect x="1408" y="613" width="1" height="22" fill="#fa9c9c"/>
<rect x="1405.5" y="572.5" width="6" height="40" fill="url(#rcan)" stroke="#ffa6a6" stroke-width="1"/>
<rect x="1417" y="594" width="1" height="14" fill="#fa9c9c"/>
<rect x="1417" y="611" width="1" height="9" fill="#fa9c9c"/>
<rect x="1414.5" y="608.5" width="6" height="2" fill="url(#rcan)" stroke="#ffa6a6" stroke-width="1"/>
<rect x="1425" y="606" width="1" height="6" fill="#86ee86"/>
<rect x="1425" y="613" width="1" height="14" fill="#86ee86"/>
<rect x="1422" y="612" width="7" height="1" fill="#86ee86"/>
<rect x="1434" y="551" width="1" height="21" fill="#86ee86"/>
<rect x="1434" y="611" width="1" height="6" fill="#86ee86"/>
<rect x="1431.5" y="572.5" width="6" height="38" fill="url(#gcan)" stroke="#8cf08c" stroke-width="1"/>
<rect x="1443" y="552" width="1" height="23" fill="#fa9c9c"/>
<rect x="1443" y="577" width="1" height="8" fill="#fa9c9c"/>
<rect x="1440" y="575" width="7" height="2" fill="#fa9c9c"/>
<rect x="1451" y="567" width="1" height="11" fill="#fa9c9c"/>
<rect x="1451" y="615" width="1" height="5" fill="#fa9c9c"/>
<rect x="1448.5" y="578.5" width="6" height="36" fill="url(#rcan)" stroke="#ffa6a6" stroke-width="1"/>
<rect x="1460" y="600" width="1" height="6" fill="#fa9c9c"/>
<rect x="1457.5" y="606.5" width="6" height="40" fill="url(#rcan)" stroke="#ffa6a6" stroke-width="1"/>
<rect x="1468" y="606" width="1" height="6" fill="#86ee86"/>
<rect x="1468" y="648" width="1" height="2" fill="#86ee86"/>
<rect x="1465.5" y="612.5" width="6" height="35" fill="url(#gcan)" stroke="#8cf08c" stroke-width="1"/>
<rect x="1477" y="600" width="1" height="14" fill="#fa9c9c"/>
<rect x="1477" y="627" width="1" height="20" fill="#fa9c9c"/>
<rect x="1474.5" y="614.5" width="6" height="12" fill="url(#rcan)" stroke="#ffa6a6" stroke-width="1"/>
<rect x="1486" y="559" width="1" height="4" fill="#86ee86"/>
<rect x="1486" y="624" width="1" height="8" fill="#86ee86"/>
<rect x="1483.5" y="563.5" width="6" height="60" fill="url(#gcan)" stroke="#8cf08c" stroke-width="1"/>
<rect x="1494" y="529" width="1" height="12" fill="#86ee86"/>
<rect x="1494" y="561" width="1" height="20" fill="#86ee86"/>
<rect x="1491.5" y="541.5" width="6" height="19" fill="url(#gcan)" stroke="#8cf08c" stroke-width="1"/>
<rect x="1503" y="531" width="1" height="12" fill="#fa9c9c"/>
<rect x="1503" y="556" width="1" height="5" fill="#fa9c9c"/>
<rect x="1500.5" y="543.5" width="6" height="12" fill="url(#rcan)" stroke="#ffa6a6" stroke-width="1"/>
<rect x="1511" y="560" width="1" height="13" fill="#86ee86"/>
<rect x="1508.5" y="529.5" width="6" height="30" fill="url(#gcan)" stroke="#8cf08c" stroke-width="1"/>
<rect x="1520" y="509" width="1" height="4" fill="#86ee86"/>
<rect x="1520" y="532" width="1" height="12" fill="#86ee86"/>
<rect x="1517.5" y="513.5" width="6" height="18" fill="url(#gcan)" stroke="#8cf08c" stroke-width="1"/>
<rect x="1529" y="561" width="1" height="8" fill="#fa9c9c"/>
<rect x="1526.5" y="515.5" width="6" height="45" fill="url(#rcan)" stroke="#ffa6a6" stroke-width="1"/>
<line x1="0" y1="108.5" x2="1535" y2="108.5" stroke="#d63232" stroke-width="1"/>
<line x1="0" y1="123.5" x2="1535" y2="123.5" stroke="#9c5a00" stroke-width="1" stroke-dasharray="20 8" stroke-dashoffset="2"/>
<line x1="0" y1="215.5" x2="1535" y2="215.5" stroke="#eea62c" stroke-width="1"/>
<line x1="0" y1="302.5" x2="1535" y2="302.5" stroke="#d63232" stroke-width="1"/>
<line x1="0" y1="403.5" x2="1535" y2="403.5" stroke="#e6e600" stroke-width="1" stroke-dasharray="20 8" stroke-dashoffset="2"/>
<line x1="0" y1="655.5" x2="1535" y2="655.5" stroke="#9c5a00" stroke-width="1" stroke-dasharray="20 8" stroke-dashoffset="2"/>
<line x1="0" y1="330" x2="1535" y2="330" stroke="#ffffff" stroke-width="2"/>
<line x1="0" y1="724" x2="1535" y2="724" stroke="#ffffff" stroke-width="2"/>
<rect x="0" y="31" width="1535" height="1" fill="#3c4a54"/>
<polyline fill="none" stroke="#8a0a66" stroke-width="1.1" stroke-linejoin="round" points="0,309.4 21.9,309.4 30,312.2 72.6,312.2 81.8,319.4 85.3,292.2 89.9,254.1 97.9,231.8 99.8,231.2 124.8,230.6 133.1,219.6 141.4,189.6 184.7,189 194.6,176.3 201.3,174 252.9,174 262.8,170.3 271.2,170.3 279.5,149.7 288.2,103.5 297,98.5 305.8,89 308.3,80.3 314.6,48.6 320.9,50.1 331.6,50.4 336,57 340,62.7 345.2,90 348.6,102.2 374.4,103.2 382.9,112.6 391.4,125.8 399.9,128.6 433.8,128.6 443.2,135.2 451.7,143.7 456.4,161.6 460.2,178.6 469.6,193.6 477.1,212.5 503.5,214.4 508.8,230 513.5,239.4 520.1,271.8 529.5,274.7 538,286.5 546.5,305.9 555.9,310.5 581.3,310.5 585.1,328 589.8,352.5 598.7,367.2 632.2,367.2 641.6,369.4 650.7,379.8 653.4,390 660.9,412.6 667.2,430.2 673.5,435.2 684.8,446 719.9,446 736.3,462.9 743.8,450.3 753.4,412.6 763.9,406.3 771.5,400.1 774,390 779.2,353.8 789.2,347 796.8,345.2 804.3,333.7 813.1,333.2 821.9,296 832,294.2 839.5,287.4 874.7,287.4 882.2,274.4 900.6,274.4 908.6,268.3 916.1,256.5 919.9,237.7 926.2,216.3 935,221.4 943.8,221.4 950,236.8 952,240.9 960.9,247.7 969.7,269.5 975.9,270.4 1020.8,270.4 1029.7,287.2 1037.1,310.3 1046.7,313.7 1054.8,328 1072.5,355.3 1090.3,355.3 1097,357.3 1106.6,357.7 1115.9,373.9 1124.7,380.2 1131,390.3 1138.5,407.8 1144.8,424.2 1150.6,436 1158.6,436.2 1167.4,447.3 1175,447.5 1183.8,469.4 1193.8,477.4 1200.2,477.4 1244.1,477.4 1252.9,493.3 1261.7,504.6 1270.5,509.1 1279.3,509.1 1288.1,504.1 1296.4,486.5 1313.2,486.2 1322.5,476.4 1398.6,476.4 1408.2,492.5 1451.4,492.5 1460.8,498.4 1468.8,500.4 1534,500.4"/>
<polyline fill="none" stroke="#0000d8" stroke-width="1.35" stroke-linejoin="round" points="0,209.2 6.9,215 23,225.3 46.1,239.2 64.5,244.9 80.6,250 115.2,250 129,247.2 149.8,241.5 184.3,232.3 226.2,212.9 259.5,199.6 289.5,188 300,186.1 315.1,182.3 332,176.7 354.6,171 382.9,160.7 405.5,146.5 431.9,134.3 450.8,129.6 460.2,128.6 486.6,128.6 499.7,131.8 512.9,135.2 535.6,155 554.4,172 563.8,183.3 573.2,191.8 582.7,202.1 590.2,214.4 600,225.7 603,230 615.3,243.2 626.6,252.6 658.6,289.4 668,296 685,312.9 705.1,330.2 720.2,340.7 740.3,349.5 755.3,352.5 770.4,353.3 790.5,347 805.6,343.2 820.7,341.5 840.8,342.7 865.9,343.2 886,340.7 903.6,335.7 918.6,332.4 933.7,334.4 953.8,334.4 978.9,335.7 994,333.3 1012.9,332.4 1024.2,327.1 1037.3,323.7 1052.4,323.3 1063.7,324.6 1080.7,324.6 1090.1,323.3 1105.1,325.2 1114.6,325.2 1124,324.3 1137.2,327.5 1156,332.7 1171.1,339.3 1184.2,347.8 1197.4,359.1 1212.5,374.2 1242.9,404.1 1270.5,425.4 1288.1,436.7 1310.7,446.8 1338.3,456.8 1355.9,460.6 1376,465.6 1391.1,468.1 1411.2,474.4 1426.3,480.7 1443.9,485.2 1458.8,493.9 1470.8,500.4 1482.7,502.8 1494.6,504.2 1504.6,504.2 1518.5,507.4 1528.5,509.4 1534,509.4"/>
<polyline fill="none" stroke="#e2b0e2" stroke-width="1.15" stroke-linejoin="round" points="0,319.8 23,329 30,333.6 46.1,342.4 55.3,342.4 66.8,327.9 80.6,312.9 89.9,287.6 99.1,266.8 113.1,239.9 133.1,206.3 155.1,150 165.1,136.8 175.2,123.6 184,116 194,108.5 202.8,101.6 209.1,95.3 215.4,89 221.7,84 227.9,80.3 236.1,79 245.5,74.6 255.6,74 262.5,70.8 270.7,70.2 278.2,69.6 288.2,69.6 293.3,71.5 299.5,75.9 307.1,81.5 314.6,85.9 322.2,90.3 331,92.8 340,102.9 345.2,107.9 356.5,121.1 375.4,134.3 382.9,144.6 391.8,149.7 403.6,147.5 416.8,144.6 428.1,146.5 439.4,155 450.8,167.3 460.2,182.3 469.6,201.2 476.2,218.1 488.4,233.2 496.5,245.1 513.5,261.1 522.9,277.1 538,305.4 553.1,331.8 564.4,350.6 581.3,369.4 590.8,392.1 598.1,403.8 608.1,416.4 618.2,426.4 630.8,435.2 643.3,442.8 658.4,450.3 667.2,447.8 681,451.6 693.6,454.1 701.1,446.5 711.2,435.2 721.2,425.2 731.3,418.9 741.3,405.1 750.1,390 752.8,383.4 762.9,365.8 772.9,343.2 783,313.1 793,287.9 803.1,265.3 813.1,250.3 825.7,237.7 840.8,225.1 855.8,217.6 865.9,213.8 882.2,210.1 891,212.6 906.1,217.6 917.4,225.1 926.2,238.9 941.3,259 963.9,298.8 977.1,327.1 986.5,338.4 999.7,352.5 1012.9,362.9 1028.9,367 1039.2,374.2 1050.5,387.3 1059.9,400 1073.2,417.4 1085.8,422.9 1098.3,427.4 1107.1,436.2 1121,441.8 1133.5,441.8 1146.1,445.5 1166.2,454.3 1170,456.3 1180.1,469.4 1193.9,484.5 1205.2,490.8 1217.7,495.8 1227.8,493.8 1236.6,491.3 1245.4,493.8 1255.4,496.3 1265.5,495.3 1278,490.3 1288.1,480.7 1296.9,471.9 1305.7,466.9 1314.5,458.1 1323.3,450.6 1330.8,446.8 1340.9,444.3 1348.4,443.5 1357.2,440.5 1366,441.3 1373.5,444.3 1383.6,453.1 1392.4,463.1 1401.2,475.7 1411.2,490.8 1425,508.8 1442.9,520.1 1458.8,538.6 1477.3,555.5 1490.7,555.1 1506.6,554.5 1520.5,548.6 1528.5,549.6 1534,548.6"/>
<rect x="514" y="318" width="17" height="22" fill="#000"/>
<rect x="937" y="393" width="12" height="20" fill="#000"/>
<path d="M527 438 L521.5 441.5 L527 445 Z" fill="#f07878"/>
<path d="M532 454 L536.5 457.5 L532 461 Z" fill="#4fd84f"/>
<use href="#xm" x="538.2" y="479.7" stroke="#4fd84f"/>
<use href="#xm" x="943.6" y="319.6" stroke="#f07878"/>
<path d="M950 332.5 L945 335.7 L950 339 Z" fill="#f07878"/>
<path d="M937.5 355 L941.5 358.5 L937.5 362 Z" fill="#4fd84f"/>
<path d="M1053.2 456 H1058.2 V462 H1060.8 L1055.7 468.6 L1050.6 462 H1053.2 Z" fill="#f07070"/>
<path d="M1062 513.4 L1057.4 516.7 L1062 520 Z" fill="#f07878"/>
<path d="M1065.7 517 L1070.7 520.5 L1065.7 524 Z" fill="#4fd84f"/>
<use href="#xm" x="1072.5" y="552.5" stroke="#4fd84f"/>
<path d="M488.5 31 H553.5 V46 Q553.5 48.5 551.0 48.5 H491.0 Q488.5 48.5 488.5 46 Z" fill="#5b3636" stroke="#8e4848" stroke-width="1"/>
<text x="492" y="44" class="lb" textLength="58.3" lengthAdjust="spacingAndGlyphs">1@12 635,9</text>
<path d="M911.5 31 H976.5 V46 Q976.5 48.5 974.0 48.5 H914.0 Q911.5 48.5 911.5 46 Z" fill="#5b3636" stroke="#8e4848" stroke-width="1"/>
<text x="915" y="44" class="lb" textLength="58.3" lengthAdjust="spacingAndGlyphs">1@12 649,4</text>
<path d="M1023.5 31 H1088.5 V46 Q1088.5 48.5 1086.0 48.5 H1026.0 Q1023.5 48.5 1023.5 46 Z" fill="#5b3636" stroke="#8e4848" stroke-width="1"/>
<text x="1027" y="44" class="lb" textLength="58.3" lengthAdjust="spacingAndGlyphs">1@12 626,4</text>
<path d="M506.5 763 V748 Q506.5 745.5 509.0 745.5 H569.0 Q571.5 745.5 571.5 748 V763 Z" fill="#2c5a2c" stroke="#3cb83c" stroke-width="1"/>
<text x="510" y="758" class="lb" textLength="58.3" lengthAdjust="spacingAndGlyphs">1@12 633,9</text>
<path d="M911.5 763 V748 Q911.5 745.5 914.0 745.5 H974.0 Q976.5 745.5 976.5 748 V763 Z" fill="#2c5a2c" stroke="#3cb83c" stroke-width="1"/>
<text x="915" y="758" class="lb" textLength="58.3" lengthAdjust="spacingAndGlyphs">1@12 646,4</text>
<path d="M1040.5 763 V748 Q1040.5 745.5 1043.0 745.5 H1103.0 Q1105.5 745.5 1105.5 748 V763 Z" fill="#2c5a2c" stroke="#3cb83c" stroke-width="1"/>
<text x="1044" y="758" class="lb" textLength="58.3" lengthAdjust="spacingAndGlyphs">1@12 625,9</text>
<text y="44" fill="#d4d4d4" fill-opacity="0.88"><tspan x="112" textLength="25.3" lengthAdjust="spacingAndGlyphs">Jour :</tspan> <tspan x="139.4" textLength="27.6" lengthAdjust="spacingAndGlyphs">+Haut</tspan> <tspan x="171.2" textLength="41.8" lengthAdjust="spacingAndGlyphs">12 811,3</tspan> <tspan x="215.8" textLength="23.5" lengthAdjust="spacingAndGlyphs">+Bas</tspan> <tspan x="244" textLength="40.2" lengthAdjust="spacingAndGlyphs">12 609,5</tspan></text>
<text x="-2" y="121" class="lb" textLength="71.7" lengthAdjust="spacingAndGlyphs">S1 J (12 676,2)</text>
<text x="-2.5" y="327.6" class="lb" textLength="32.8" lengthAdjust="spacingAndGlyphs">12 650</text>
<text x="-1" y="400.6" class="lb" textLength="82.2" lengthAdjust="spacingAndGlyphs">mS1 H (12 640,8)</text>
<text x="-1" y="653.5" class="lb" textLength="80.1" lengthAdjust="spacingAndGlyphs">mS2 J (12 608,8)</text>
<text x="-2.5" y="721.7" class="lb" textLength="32.8" lengthAdjust="spacingAndGlyphs">12 600</text>
<text x="0" y="760" class="lb" textLength="84.2" lengthAdjust="spacingAndGlyphs">© IT-Finance.com</text>
<text x="89.5" y="760" class="lb" textLength="99.4" lengthAdjust="spacingAndGlyphs" font-style="italic">Données indicatives</text>
<text x="1444.3" y="106" class="lb" textLength="88.7" lengthAdjust="spacingAndGlyphs">+B OVN (12 678,1)</text>
<text x="1459.3" y="213" class="lb" textLength="73.7" lengthAdjust="spacingAndGlyphs">+B V (12 664,6)</text>
<text x="1416.5" y="300" class="lb" textLength="116.5" lengthAdjust="spacingAndGlyphs">+ B Premarket (12 653,6)</text>
</g>
<rect x="0" y="31.9" width="107.5" height="16.5" fill="url(#hdg)"/>
<path d="M107.0 31.9 V47.9 H0" fill="none" stroke="#7f9db2" stroke-width="1"/>
<text x="1.5" y="43.9" class="hd" textLength="17.3" lengthAdjust="spacingAndGlyphs">Prix</text>
<use href="#wrench" x="23" y="33"/>
<use href="#win" x="40" y="33"/>
<use href="#xc" x="57" y="33"/>
<use href="#docd" x="74" y="33"/>
<use href="#docu" x="91" y="33"/>
<rect x="0" y="762" width="1535" height="4" fill="#ffffff"/>
<rect x="0" y="762" width="1535" height="1" fill="#8496a2"/>
<rect x="0" y="765" width="1535" height="1" fill="#8496a2"/>
<rect x="0" y="855" width="1535" height="4" fill="#ffffff"/>
<rect x="0" y="855" width="1535" height="1" fill="#8496a2"/>
<rect x="0" y="858" width="1535" height="1" fill="#8496a2"/>
<line x1="0" y1="790.5" x2="1535" y2="790.5" stroke="#6e6e00" stroke-width="1"/>
<line x1="0" y1="831.5" x2="1535" y2="831.5" stroke="#6e6e00" stroke-width="1"/>
<line x1="0" y1="806.5" x2="1535" y2="806.5" stroke="#6e6e00" stroke-width="1" stroke-dasharray="20 8" stroke-dashoffset="2"/>
<line x1="0" y1="815.5" x2="1535" y2="815.5" stroke="#6e6e00" stroke-width="1" stroke-dasharray="20 8" stroke-dashoffset="2"/>
<line x1="0" y1="811.5" x2="1535" y2="811.5" stroke="#e8e8e8" stroke-width="1"/>
<polyline fill="none" stroke="#e4e4e4" stroke-width="1.1" stroke-linejoin="round" points="0,819.5 12.1,814.5 22.1,820.3 29.6,821.5 38.9,818.3 46.5,819.5 55.2,812.7 64.8,801.4 72.8,803.4 80.9,802.2 89.9,793.1 98.4,791.1 107.5,798.4 115.5,796.4 124.3,795.2 133.1,793.1 141.9,795.4 150.7,794.4 158.7,794.4 167,796.2 175.8,798.2 184.6,802.4 193.3,801.4 202.9,802.7 210.9,799.4 221,800.7 227.2,802.7 235.3,806 244.8,803.2 253.1,808.2 262.4,804.4 269.9,808.2 278.7,807 288.8,808.2 297.6,813.2 306.3,816.2 317.6,816.2 330.9,814.5 340.2,819.5 349,821.8 357.8,823.8 366.1,820.5 374.1,818.5 383.4,823.5 391.7,815.2 400,811 408.8,809.5 417.6,809.5 425.9,814.5 434.7,817 443.2,820.3 451.5,821.5 460.3,827.3 469.1,829.6 477.3,830.8 486.1,824.5 495.4,824.5 503.7,819.3 512.2,822.3 520.5,826.3 529.3,827.3 538.1,828.5 546.9,829.6 555.7,824.3 564,826.5 572.8,823.3 581.3,824.3 589.6,830.8 598.4,826.5 607.2,823.5 615.9,820.3 624.7,817.5 633.5,819.5 641.8,820.5 650.6,818.5 659.1,818.3 667.4,810.5 676.2,816.2 685,815.5 693.8,814.2 700.6,806 710.1,804.4 718.9,803.4 727.7,807.2 736.5,803.4 745.3,801.2 753.5,796.4 762.3,799.4 771.1,796.2 779.7,792.4 788.7,791.1 796.7,793.1 805,793.1 813.8,799.4 822.6,801.2 831.4,802.4 839.7,801.2 848.5,803.4 857.3,805.7 865.8,805.7 874.6,805.4 882.9,806.2 891.7,810.5 900.4,812.2 908.7,812.2 917.5,817.3 926.1,822.3 934.6,825.5 943.1,821.3 951.9,826.3 960.7,827.3 969.5,830.8 977.8,827.3 986.6,821.3 994.6,820.3 1003.4,823.5 1012.2,820.5 1020.5,814.5 1029,814.2 1037.8,818.5 1046.6,822.3 1054.9,823.3 1063.7,825.3 1072.4,825.3 1081.2,817.5 1089.5,815.5 1098.1,817.3 1106.8,821.5 1115.6,817.5 1123.9,815 1132.7,812.2 1141.5,814.2 1149.8,816.2 1158.6,816.2 1167.4,818.3 1175.9,821.5 1184.2,825.5 1193,825.5 1193,825.8 1201.8,819.3 1210.6,817.3 1219.4,816.2 1228.2,810.5 1236.2,809.2 1244.5,815.2 1253.3,815.2 1262.1,813.2 1270.3,809.2 1279.1,806.2 1287.7,803.2 1296.5,801.2 1305.2,806 1313.5,802.4 1322.3,800.2 1331.1,805.4 1339.9,809.5 1348.7,808.2 1357,807.2 1365.8,810.5 1374.3,816.2 1382.6,817.5 1391.4,821.3 1400.2,823.5 1408.4,826.3 1417.2,826.3 1425.8,826.3 1434.6,819.3 1443.3,820.3 1451.6,823.3 1460.4,826.3 1468.7,820.3 1477.5,822.3 1486.3,813.5 1494.3,811.7 1503.6,812.5 1511.9,809.2 1520.2,808.2 1529.5,813.5 1534.5,811.5"/>
<rect x="0" y="766" width="215.5" height="16.5" fill="url(#hdg)"/>
<path d="M215.0 766 V782.0 H0" fill="none" stroke="#7f9db2" stroke-width="1"/>
<text x="1.5" y="778" class="hd" textLength="158.8" lengthAdjust="spacingAndGlyphs">Relative strength index (RSI) (14)</text>
<use href="#wrench" x="165" y="767.1"/>
<use href="#win" x="182" y="767.1"/>
<use href="#xc" x="199" y="767.1"/>
<g clip-path="url(#cp3)">
<path d="M0 910.7 L2.3 908.6 L2.3 914.9 L0 916.5 Z" fill="#000060"/>
<path d="M2 908.6 L4.3 906.4 L4.3 913.3 L2 914.9 Z" fill="#000060"/>
<path d="M4 906.4 L6.3 904.3 L6.3 911.7 L4 913.3 Z" fill="#000060"/>
<path d="M6 904.3 L8.3 902.1 L8.3 910.1 L6 911.7 Z" fill="#000060"/>
<path d="M8 902.1 L10.3 899.9 L10.3 908.5 L8 910.1 Z" fill="#000060"/>
<path d="M10 899.9 L12.3 897.8 L12.3 906.9 L10 908.5 Z" fill="#000060"/>
<path d="M12 897.8 L14.3 896.9 L14.3 905.3 L12 906.9 Z" fill="#000060"/>
<path d="M14 896.9 L16.3 896.4 L16.3 903.7 L14 905.3 Z" fill="#000060"/>
<path d="M16 896.4 L18.3 895.9 L18.3 902.1 L16 903.7 Z" fill="#000060"/>
<path d="M18 895.9 L20.3 895.5 L20.3 900.5 L18 902.1 Z" fill="#000060"/>
<path d="M20 895.5 L22.3 895.3 L22.3 899.2 L20 900.5 Z" fill="#000060"/>
<path d="M22 895.3 L24.3 895.8 L24.3 898.5 L22 899.2 Z" fill="#000060"/>
<path d="M24 895.8 L26.3 896.2 L26.3 897.8 L24 898.5 Z" fill="#000060"/>
<path d="M26 896.2 L28.3 896.7 L28.3 897.2 L26 897.8 Z" fill="#000060"/>
<path d="M30 897.2 L32.3 896.8 L32.3 896.3 L30 896.5 Z" fill="#7a3838"/>
<path d="M32 896.8 L34.3 896.3 L34.3 896.1 L32 896.3 Z" fill="#7a3838"/>
<path d="M38 895.4 L40.3 895.3 L40.3 895.8 L38 895.8 Z" fill="#000060"/>
<path d="M40 895.3 L42.3 895.6 L42.3 896 L40 895.8 Z" fill="#000060"/>
<path d="M42 895.6 L44.3 895.9 L44.3 896.2 L42 896 Z" fill="#000060"/>
<path d="M44 895.9 L46.3 896.1 L46.3 896.4 L44 896.2 Z" fill="#000060"/>
<path d="M48 896.8 L50.3 897.5 L50.3 896.9 L48 896.7 Z" fill="#7a3838"/>
<path d="M50 897.5 L52.3 898.2 L52.3 897.2 L50 896.9 Z" fill="#7a3838"/>
<path d="M52 898.2 L54.3 899 L54.3 897.5 L52 897.2 Z" fill="#7a3838"/>
<path d="M54 899 L56.3 898.9 L56.3 897.6 L54 897.5 Z" fill="#7a3838"/>
<path d="M56 898.9 L58.3 897.4 L58.3 897.2 L56 897.6 Z" fill="#7a3838"/>
<path d="M58 897.4 L60.3 896 L60.3 896.9 L58 897.2 Z" fill="#000060"/>
<path d="M60 896 L62.3 894.5 L62.3 896.6 L60 896.9 Z" fill="#000060"/>
<path d="M62 894.5 L64.3 892.8 L64.3 895.8 L62 896.6 Z" fill="#000060"/>
<path d="M64 892.8 L66.3 890.9 L66.3 894.8 L64 895.8 Z" fill="#000060"/>
<path d="M66 890.9 L68.3 889.1 L68.3 893.8 L66 894.8 Z" fill="#000060"/>
<path d="M68 889.1 L70.3 887.2 L70.3 892.8 L68 893.8 Z" fill="#000060"/>
<path d="M70 887.2 L72.3 885.4 L72.3 891.8 L70 892.8 Z" fill="#000060"/>
<path d="M72 885.4 L74.3 883.9 L74.3 890.5 L72 891.8 Z" fill="#000060"/>
<path d="M74 883.9 L76.3 882.6 L76.3 889 L74 890.5 Z" fill="#000060"/>
<path d="M76 882.6 L78.3 881.3 L78.3 887.5 L76 889 Z" fill="#000060"/>
<path d="M78 881.3 L80.3 880 L80.3 886 L78 887.5 Z" fill="#000060"/>
<path d="M80 880 L82.3 878.7 L82.3 884.5 L80 886 Z" fill="#000060"/>
<path d="M82 878.7 L84.3 877.5 L84.3 883.1 L82 884.5 Z" fill="#000060"/>
<path d="M84 877.5 L86.3 876.6 L86.3 881.8 L84 883.1 Z" fill="#000060"/>
<path d="M86 876.6 L88.3 875.6 L88.3 880.5 L86 881.8 Z" fill="#000060"/>
<path d="M88 875.6 L90.3 874.6 L90.3 879.2 L88 880.5 Z" fill="#000060"/>
<path d="M90 874.6 L92.3 873.7 L92.3 877.9 L90 879.2 Z" fill="#000060"/>
<path d="M92 873.7 L94.3 873 L94.3 877 L92 877.9 Z" fill="#000060"/>
<path d="M94 873 L96.3 872.2 L96.3 876 L94 877 Z" fill="#000060"/>
<path d="M96 872.2 L98.3 871.5 L98.3 875 L96 876 Z" fill="#000060"/>
<path d="M98 871.5 L100.3 870.7 L100.3 874 L98 875 Z" fill="#000060"/>
<path d="M100 870.7 L102.3 870.3 L102.3 873.4 L100 874 Z" fill="#000060"/>
<path d="M102 870.3 L104.3 869.9 L104.3 872.8 L102 873.4 Z" fill="#000060"/>
<path d="M104 869.9 L106.3 869.5 L106.3 872.2 L104 872.8 Z" fill="#000060"/>
<path d="M106 869.5 L108.3 869.1 L108.3 871.6 L106 872.2 Z" fill="#000060"/>
<path d="M108 869.1 L110.3 868.7 L110.3 871 L108 871.6 Z" fill="#000060"/>
<path d="M110 868.7 L112.3 868.3 L112.3 870.4 L110 871 Z" fill="#000060"/>
<path d="M112 868.3 L114.3 868 L114.3 870 L112 870.4 Z" fill="#000060"/>
<path d="M114 868 L116.3 868 L116.3 869.8 L114 870 Z" fill="#000060"/>
<path d="M116 868 L118.3 867.9 L118.3 869.6 L116 869.8 Z" fill="#000060"/>
<path d="M118 867.9 L120.3 867.9 L120.3 869.4 L118 869.6 Z" fill="#000060"/>
<path d="M120 867.9 L122.3 867.8 L122.3 869.2 L120 869.4 Z" fill="#000060"/>
<path d="M122 867.8 L124.3 867.7 L124.3 869 L122 869.2 Z" fill="#000060"/>
<path d="M124 867.7 L126.3 867.7 L126.3 868.8 L124 869 Z" fill="#000060"/>
<path d="M126 867.7 L128.3 867.6 L128.3 868.6 L126 868.8 Z" fill="#000060"/>
<path d="M128 867.6 L130.3 867.6 L130.3 868.4 L128 868.6 Z" fill="#000060"/>
<path d="M130 867.6 L132.3 867.5 L132.3 868.2 L130 868.4 Z" fill="#000060"/>
<path d="M132 867.5 L134.3 867.4 L134.3 868.1 L132 868.2 Z" fill="#000060"/>
<path d="M134 867.4 L136.3 867.4 L136.3 868 L134 868.1 Z" fill="#000060"/>
<path d="M136 867.4 L138.3 867.3 L138.3 867.9 L136 868 Z" fill="#000060"/>
<path d="M138 867.3 L140.3 867.2 L140.3 867.8 L138 867.9 Z" fill="#000060"/>
<path d="M140 867.2 L142.3 867.2 L142.3 867.7 L140 867.8 Z" fill="#000060"/>
<path d="M142 867.2 L144.3 867.1 L144.3 867.6 L142 867.7 Z" fill="#000060"/>
<path d="M144 867.1 L146.3 867.1 L146.3 867.6 L144 867.6 Z" fill="#000060"/>
<path d="M146 867.1 L148.3 867.4 L148.3 867.8 L146 867.6 Z" fill="#000060"/>
<path d="M154 868.4 L156.3 868.8 L156.3 868.4 L154 868.3 Z" fill="#7a3838"/>
<path d="M156 868.8 L158.3 869.1 L158.3 868.6 L156 868.4 Z" fill="#7a3838"/>
<path d="M158 869.1 L160.3 869.4 L160.3 868.8 L158 868.6 Z" fill="#7a3838"/>
<path d="M160 869.4 L162.3 869.9 L162.3 868.9 L160 868.8 Z" fill="#7a3838"/>
<path d="M162 869.9 L164.3 870.3 L164.3 869.1 L162 868.9 Z" fill="#7a3838"/>
<path d="M164 870.3 L166.3 870.8 L166.3 869.3 L164 869.1 Z" fill="#7a3838"/>
<path d="M166 870.8 L168.3 871.3 L168.3 869.5 L166 869.3 Z" fill="#7a3838"/>
<path d="M168 871.3 L170.3 872.3 L170.3 870.1 L168 869.5 Z" fill="#7a3838"/>
<path d="M170 872.3 L172.3 873.5 L172.3 870.6 L170 870.1 Z" fill="#7a3838"/>
<path d="M172 873.5 L174.3 874.6 L174.3 871.2 L172 870.6 Z" fill="#7a3838"/>
<path d="M174 874.6 L176.3 875.8 L176.3 871.8 L174 871.2 Z" fill="#7a3838"/>
<path d="M176 875.8 L178.3 877 L178.3 872.6 L176 871.8 Z" fill="#7a3838"/>
<path d="M178 877 L180.3 878.5 L180.3 873.8 L178 872.6 Z" fill="#7a3838"/>
<path d="M180 878.5 L182.3 879.9 L182.3 874.9 L180 873.8 Z" fill="#7a3838"/>
<path d="M182 879.9 L184.3 881.3 L184.3 876.1 L182 874.9 Z" fill="#7a3838"/>
<path d="M184 881.3 L186.3 882.7 L186.3 877.2 L184 876.1 Z" fill="#7a3838"/>
<path d="M186 882.7 L188.3 884.1 L188.3 878.5 L186 877.2 Z" fill="#7a3838"/>
<path d="M188 884.1 L190.3 885.4 L190.3 879.7 L188 878.5 Z" fill="#7a3838"/>
<path d="M190 885.4 L192.3 886.7 L192.3 881 L190 879.7 Z" fill="#7a3838"/>
<path d="M192 886.7 L194.3 888 L194.3 882.2 L192 881 Z" fill="#7a3838"/>
<path d="M194 888 L196.3 889.4 L196.3 883.6 L194 882.2 Z" fill="#7a3838"/>
<path d="M196 889.4 L198.3 890.8 L198.3 885 L196 883.6 Z" fill="#7a3838"/>
<path d="M198 890.8 L200.3 892.3 L200.3 886.5 L198 885 Z" fill="#7a3838"/>
<path d="M200 892.3 L202.3 893.7 L202.3 887.9 L200 886.5 Z" fill="#7a3838"/>
<path d="M202 893.7 L204.3 894.9 L204.3 889.2 L202 887.9 Z" fill="#7a3838"/>
<path d="M204 894.9 L206.3 895.6 L206.3 890.4 L204 889.2 Z" fill="#7a3838"/>
<path d="M206 895.6 L208.3 896.3 L208.3 891.5 L206 890.4 Z" fill="#7a3838"/>
<path d="M208 896.3 L210.3 896.9 L210.3 892.7 L208 891.5 Z" fill="#7a3838"/>
<path d="M210 896.9 L212.3 897.6 L212.3 893.8 L210 892.7 Z" fill="#7a3838"/>
<path d="M212 897.6 L214.3 898.5 L214.3 895 L212 893.8 Z" fill="#7a3838"/>
<path d="M214 898.5 L216.3 899.3 L216.3 896.1 L214 895 Z" fill="#7a3838"/>
<path d="M216 899.3 L218.3 900.2 L218.3 897.2 L216 896.1 Z" fill="#7a3838"/>
<path d="M218 900.2 L220.3 900.9 L220.3 898.3 L218 897.2 Z" fill="#7a3838"/>
<path d="M220 900.9 L222.3 900.8 L222.3 898.8 L220 898.3 Z" fill="#7a3838"/>
<path d="M222 900.8 L224.3 900.7 L224.3 899.3 L222 898.8 Z" fill="#7a3838"/>
<path d="M224 900.7 L226.3 900.5 L226.3 899.9 L224 899.3 Z" fill="#7a3838"/>
<path d="M226 900.5 L228.3 900.9 L228.3 900.3 L226 899.9 Z" fill="#7a3838"/>
<path d="M228 900.9 L230.3 901.9 L230.3 900.7 L228 900.3 Z" fill="#7a3838"/>
<path d="M230 901.9 L232.3 903 L232.3 901.1 L230 900.7 Z" fill="#7a3838"/>
<path d="M232 903 L234.3 904.1 L234.3 901.5 L232 901.1 Z" fill="#7a3838"/>
<path d="M234 904.1 L236.3 905.2 L236.3 901.9 L234 901.5 Z" fill="#7a3838"/>
<path d="M236 905.2 L238.3 905.2 L238.3 902.2 L236 901.9 Z" fill="#7a3838"/>
<path d="M238 905.2 L240.3 905.2 L240.3 902.5 L238 902.2 Z" fill="#7a3838"/>
<path d="M240 905.2 L242.3 905.2 L242.3 902.8 L240 902.5 Z" fill="#7a3838"/>
<path d="M242 905.2 L244.3 905.2 L244.3 903.1 L242 902.8 Z" fill="#7a3838"/>
<path d="M244 905.2 L246.3 906.2 L246.3 903.8 L244 903.1 Z" fill="#7a3838"/>
<path d="M246 906.2 L248.3 907.8 L248.3 904.8 L246 903.8 Z" fill="#7a3838"/>
<path d="M248 907.8 L250.3 909.4 L250.3 905.9 L248 904.8 Z" fill="#7a3838"/>
<path d="M250 909.4 L252.3 911 L252.3 906.9 L250 905.9 Z" fill="#7a3838"/>
<path d="M252 911 L254.3 912.2 L254.3 907.8 L252 906.9 Z" fill="#7a3838"/>
<path d="M254 912.2 L256.3 912 L256.3 908.3 L254 907.8 Z" fill="#7a3838"/>
<path d="M256 912 L258.3 911.7 L258.3 908.7 L256 908.3 Z" fill="#7a3838"/>
<path d="M258 911.7 L260.3 911.5 L260.3 909.2 L258 908.7 Z" fill="#7a3838"/>
<path d="M260 911.5 L262.3 911.3 L262.3 909.6 L260 909.2 Z" fill="#7a3838"/>
<path d="M262 911.3 L264.3 911.4 L264.3 910.2 L262 909.6 Z" fill="#7a3838"/>
<path d="M264 911.4 L266.3 911.7 L266.3 910.7 L264 910.2 Z" fill="#7a3838"/>
<path d="M266 911.7 L268.3 911.9 L268.3 911.2 L266 910.7 Z" fill="#7a3838"/>
<path d="M268 911.9 L270.3 912.1 L270.3 911.7 L268 911.2 Z" fill="#7a3838"/>
<path d="M274 911.1 L276.3 910.3 L276.3 911.2 L274 911.6 Z" fill="#000060"/>
<path d="M276 910.3 L278.3 909.5 L278.3 910.9 L276 911.2 Z" fill="#000060"/>
<path d="M278 909.5 L280.3 909.2 L280.3 910.8 L278 910.9 Z" fill="#000060"/>
<path d="M280 909.2 L282.3 909.7 L282.3 910.8 L280 910.8 Z" fill="#000060"/>
<path d="M282 909.7 L284.3 910.3 L284.3 910.9 L282 910.8 Z" fill="#000060"/>
<path d="M284 910.3 L286.3 910.8 L286.3 910.9 L284 910.9 Z" fill="#000060"/>
<path d="M296 910.3 L298.3 911.5 L298.3 910.7 L296 910.3 Z" fill="#7a3838"/>
<path d="M298 911.5 L300.3 912.9 L300.3 911.3 L298 910.7 Z" fill="#7a3838"/>
<path d="M300 912.9 L302.3 914.3 L302.3 911.9 L300 911.3 Z" fill="#7a3838"/>
<path d="M302 914.3 L304.3 915.7 L304.3 912.4 L302 911.9 Z" fill="#7a3838"/>
<path d="M304 915.7 L306.3 916.9 L306.3 913.1 L304 912.4 Z" fill="#7a3838"/>
<path d="M306 916.9 L308.3 917.6 L308.3 914 L306 913.1 Z" fill="#7a3838"/>
<path d="M308 917.6 L310.3 918.3 L310.3 914.9 L308 914 Z" fill="#7a3838"/>
<path d="M310 918.3 L312.3 919.1 L312.3 915.7 L310 914.9 Z" fill="#7a3838"/>
<path d="M312 919.1 L314.3 919.8 L314.3 916.6 L312 915.7 Z" fill="#7a3838"/>
<path d="M314 919.8 L316.3 920.4 L316.3 917.3 L314 916.6 Z" fill="#7a3838"/>
<path d="M316 920.4 L318.3 921 L318.3 918.1 L316 917.3 Z" fill="#7a3838"/>
<path d="M318 921 L320.3 921.5 L320.3 918.8 L318 918.1 Z" fill="#7a3838"/>
<path d="M320 921.5 L322.3 922.1 L322.3 919.5 L320 918.8 Z" fill="#7a3838"/>
<path d="M322 922.1 L324.3 922.4 L324.3 920.1 L322 919.5 Z" fill="#7a3838"/>
<path d="M324 922.4 L326.3 922.7 L326.3 920.6 L324 920.1 Z" fill="#7a3838"/>
<path d="M326 922.7 L328.3 922.9 L328.3 921.2 L326 920.6 Z" fill="#7a3838"/>
<path d="M328 922.9 L330.3 923.1 L330.3 921.7 L328 921.2 Z" fill="#7a3838"/>
<path d="M330 923.1 L332.3 923.4 L332.3 922.2 L330 921.7 Z" fill="#7a3838"/>
<path d="M332 923.4 L334.3 924 L334.3 922.6 L332 922.2 Z" fill="#7a3838"/>
<path d="M334 924 L336.3 924.5 L336.3 923.1 L334 922.6 Z" fill="#7a3838"/>
<path d="M336 924.5 L338.3 925 L338.3 923.5 L336 923.1 Z" fill="#7a3838"/>
<path d="M338 925 L340.3 925.5 L340.3 924 L338 923.5 Z" fill="#7a3838"/>
<path d="M340 925.5 L342.3 924.9 L342.3 923.9 L340 924 Z" fill="#7a3838"/>
<path d="M342 924.9 L344.3 924.2 L344.3 923.7 L342 923.9 Z" fill="#7a3838"/>
<path d="M346 923.4 L348.3 922.7 L348.3 923.4 L346 923.6 Z" fill="#000060"/>
<path d="M348 922.7 L350.3 922.2 L350.3 923.2 L348 923.4 Z" fill="#000060"/>
<path d="M350 922.2 L352.3 922 L352.3 923.1 L350 923.2 Z" fill="#000060"/>
<path d="M352 922 L354.3 921.7 L354.3 923 L352 923.1 Z" fill="#000060"/>
<path d="M354 921.7 L356.3 921.5 L356.3 922.9 L354 923 Z" fill="#000060"/>
<path d="M356 921.5 L358.3 921.3 L358.3 922.8 L356 922.9 Z" fill="#000060"/>
<path d="M358 921.3 L360.3 920.9 L360.3 922.4 L358 922.8 Z" fill="#000060"/>
<path d="M360 920.9 L362.3 920.6 L362.3 922 L360 922.4 Z" fill="#000060"/>
<path d="M362 920.6 L364.3 920.2 L364.3 921.6 L362 922 Z" fill="#000060"/>
<path d="M364 920.2 L366.3 919.9 L366.3 921.2 L364 921.6 Z" fill="#000060"/>
<path d="M366 919.9 L368.3 919.7 L368.3 920.9 L366 921.2 Z" fill="#000060"/>
<path d="M368 919.7 L370.3 919.6 L370.3 920.7 L368 920.9 Z" fill="#000060"/>
<path d="M370 919.6 L372.3 919.5 L372.3 920.6 L370 920.7 Z" fill="#000060"/>
<path d="M372 919.5 L374.3 919.4 L374.3 920.4 L372 920.6 Z" fill="#000060"/>
<path d="M374 919.4 L376.3 919.3 L376.3 920.2 L374 920.4 Z" fill="#000060"/>
<path d="M376 919.3 L378.3 919.4 L378.3 920 L376 920.2 Z" fill="#000060"/>
<path d="M378 919.4 L380.3 919.5 L380.3 919.8 L378 920 Z" fill="#000060"/>
<path d="M380 919.5 L382.3 918.9 L382.3 919.3 L380 919.8 Z" fill="#000060"/>
<path d="M382 918.9 L384.3 918.2 L384.3 918.9 L382 919.3 Z" fill="#000060"/>
<path d="M384 918.2 L386.3 917.5 L386.3 918.5 L384 918.9 Z" fill="#000060"/>
<path d="M386 917.5 L388.3 916.9 L388.3 918 L386 918.5 Z" fill="#000060"/>
<path d="M388 916.9 L390.3 916.2 L390.3 917.6 L388 918 Z" fill="#000060"/>
<path d="M390 916.2 L392.3 915 L392.3 917 L390 917.6 Z" fill="#000060"/>
<path d="M392 915 L394.3 912.9 L394.3 916 L392 917 Z" fill="#000060"/>
<path d="M394 912.9 L396.3 910.8 L396.3 915.1 L394 916 Z" fill="#000060"/>
<path d="M396 910.8 L398.3 908.7 L398.3 914.2 L396 915.1 Z" fill="#000060"/>
<path d="M398 908.7 L400.3 906.6 L400.3 913.3 L398 914.2 Z" fill="#000060"/>
<path d="M400 906.6 L402.3 904.5 L402.3 911.5 L400 913.3 Z" fill="#000060"/>
<path d="M402 904.5 L404.3 902.3 L404.3 909.7 L402 911.5 Z" fill="#000060"/>
<path d="M404 902.3 L406.3 900.2 L406.3 907.8 L404 909.7 Z" fill="#000060"/>
<path d="M406 900.2 L408.3 898.1 L408.3 906 L406 907.8 Z" fill="#000060"/>
<path d="M408 898.1 L410.3 896.2 L410.3 904.2 L408 906 Z" fill="#000060"/>
<path d="M410 896.2 L412.3 894.4 L412.3 902.4 L410 904.2 Z" fill="#000060"/>
<path d="M412 894.4 L414.3 892.6 L414.3 900.5 L412 902.4 Z" fill="#000060"/>
<path d="M414 892.6 L416.3 890.9 L416.3 898.7 L414 900.5 Z" fill="#000060"/>
<path d="M416 890.9 L418.3 889.1 L418.3 896.9 L416 898.7 Z" fill="#000060"/>
<path d="M418 889.1 L420.3 887.6 L420.3 895.1 L418 896.9 Z" fill="#000060"/>
<path d="M420 887.6 L422.3 886.1 L422.3 893.3 L420 895.1 Z" fill="#000060"/>
<path d="M422 886.1 L424.3 884.5 L424.3 891.6 L422 893.3 Z" fill="#000060"/>
<path d="M424 884.5 L426.3 883 L426.3 889.8 L424 891.6 Z" fill="#000060"/>
<path d="M426 883 L428.3 882.6 L428.3 888.5 L426 889.8 Z" fill="#000060"/>
<path d="M428 882.6 L430.3 882.6 L430.3 887.3 L428 888.5 Z" fill="#000060"/>
<path d="M430 882.6 L432.3 882.6 L432.3 886.1 L430 887.3 Z" fill="#000060"/>
<path d="M432 882.6 L434.3 882.6 L434.3 884.9 L432 886.1 Z" fill="#000060"/>
<path d="M434 882.6 L436.3 884.5 L436.3 884.8 L434 884.9 Z" fill="#000060"/>
<path d="M436 884.5 L438.3 887.1 L438.3 885.1 L436 884.8 Z" fill="#7a3838"/>
<path d="M438 887.1 L440.3 889.6 L440.3 885.3 L438 885.1 Z" fill="#7a3838"/>
<path d="M440 889.6 L442.3 892.2 L442.3 885.5 L440 885.3 Z" fill="#7a3838"/>
<path d="M442 892.2 L444.3 894.7 L444.3 886.7 L442 885.5 Z" fill="#7a3838"/>
<path d="M444 894.7 L446.3 897.1 L446.3 888.4 L444 886.7 Z" fill="#7a3838"/>
<path d="M446 897.1 L448.3 899.6 L448.3 890.1 L446 888.4 Z" fill="#7a3838"/>
<path d="M448 899.6 L450.3 902 L450.3 891.8 L448 890.1 Z" fill="#7a3838"/>
<path d="M450 902 L452.3 904.5 L452.3 893.7 L450 891.8 Z" fill="#7a3838"/>
<path d="M452 904.5 L454.3 906.9 L454.3 896.2 L452 893.7 Z" fill="#7a3838"/>
<path d="M454 906.9 L456.3 909.3 L456.3 898.6 L454 896.2 Z" fill="#7a3838"/>
<path d="M456 909.3 L458.3 911.7 L458.3 901.1 L456 898.6 Z" fill="#7a3838"/>
<path d="M458 911.7 L460.3 914.1 L460.3 903.5 L458 901.1 Z" fill="#7a3838"/>
<path d="M460 914.1 L462.3 915.9 L462.3 905.8 L460 903.5 Z" fill="#7a3838"/>
<path d="M462 915.9 L464.3 917.6 L464.3 908.1 L462 905.8 Z" fill="#7a3838"/>
<path d="M464 917.6 L466.3 919.4 L466.3 910.4 L464 908.1 Z" fill="#7a3838"/>
<path d="M466 919.4 L468.3 921.1 L468.3 912.7 L466 910.4 Z" fill="#7a3838"/>
<path d="M468 921.1 L470.3 922.6 L470.3 914.7 L468 912.7 Z" fill="#7a3838"/>
<path d="M470 922.6 L472.3 923.8 L472.3 916.5 L470 914.7 Z" fill="#7a3838"/>
<path d="M472 923.8 L474.3 925 L474.3 918.2 L472 916.5 Z" fill="#7a3838"/>
<path d="M474 925 L476.3 926.2 L476.3 919.9 L474 918.2 Z" fill="#7a3838"/>
<path d="M476 926.2 L478.3 927.3 L478.3 921.6 L476 919.9 Z" fill="#7a3838"/>
<path d="M478 927.3 L480.3 927.1 L480.3 922.4 L478 921.6 Z" fill="#7a3838"/>
<path d="M480 927.1 L482.3 927 L482.3 923.3 L480 922.4 Z" fill="#7a3838"/>
<path d="M482 927 L484.3 926.8 L484.3 924.1 L482 923.3 Z" fill="#7a3838"/>
<path d="M484 926.8 L486.3 926.6 L486.3 925 L484 924.1 Z" fill="#7a3838"/>
<path d="M486 926.6 L488.3 926.4 L488.3 925.5 L486 925 Z" fill="#7a3838"/>
<path d="M488 926.4 L490.3 926.1 L490.3 925.8 L488 925.5 Z" fill="#7a3838"/>
<path d="M492 925.8 L494.3 925.5 L494.3 926.3 L492 926.1 Z" fill="#000060"/>
<path d="M494 925.5 L496.3 925.1 L496.3 926.4 L494 926.3 Z" fill="#000060"/>
<path d="M496 925.1 L498.3 924.2 L498.3 925.9 L496 926.4 Z" fill="#000060"/>
<path d="M498 924.2 L500.3 923.3 L500.3 925.3 L498 925.9 Z" fill="#000060"/>
<path d="M500 923.3 L502.3 922.3 L502.3 924.7 L500 925.3 Z" fill="#000060"/>
<path d="M502 922.3 L504.3 921.4 L504.3 924.1 L502 924.7 Z" fill="#000060"/>
<path d="M504 921.4 L506.3 920.8 L506.3 923.5 L504 924.1 Z" fill="#000060"/>
<path d="M506 920.8 L508.3 920.2 L508.3 922.9 L506 923.5 Z" fill="#000060"/>
<path d="M508 920.2 L510.3 919.7 L510.3 922.3 L508 922.9 Z" fill="#000060"/>
<path d="M510 919.7 L512.3 919.1 L512.3 921.6 L510 922.3 Z" fill="#000060"/>
<path d="M512 919.1 L514.3 918.8 L514.3 921.1 L512 921.6 Z" fill="#000060"/>
<path d="M514 918.8 L516.3 918.8 L516.3 920.6 L514 921.1 Z" fill="#000060"/>
<path d="M516 918.8 L518.3 918.8 L518.3 920.2 L516 920.6 Z" fill="#000060"/>
<path d="M518 918.8 L520.3 918.8 L520.3 919.7 L518 920.2 Z" fill="#000060"/>
<path d="M520 918.8 L522.3 918.8 L522.3 919.3 L520 919.7 Z" fill="#000060"/>
<path d="M526 920 L528.3 920.5 L528.3 919.6 L526 919.5 Z" fill="#7a3838"/>
<path d="M528 920.5 L530.3 921.1 L530.3 919.7 L528 919.6 Z" fill="#7a3838"/>
<path d="M530 921.1 L532.3 921.7 L532.3 920 L530 919.7 Z" fill="#7a3838"/>
<path d="M532 921.7 L534.3 922.3 L534.3 920.3 L532 920 Z" fill="#7a3838"/>
<path d="M534 922.3 L536.3 923 L536.3 920.5 L534 920.3 Z" fill="#7a3838"/>
<path d="M536 923 L538.3 923.6 L538.3 920.8 L536 920.5 Z" fill="#7a3838"/>
<path d="M538 923.6 L540.3 924.2 L540.3 921.3 L538 920.8 Z" fill="#7a3838"/>
<path d="M540 924.2 L542.3 924.9 L542.3 922.1 L540 921.3 Z" fill="#7a3838"/>
<path d="M542 924.9 L544.3 925.6 L544.3 922.9 L542 922.1 Z" fill="#7a3838"/>
<path d="M544 925.6 L546.3 926.2 L546.3 923.7 L544 922.9 Z" fill="#7a3838"/>
<path d="M546 926.2 L548.3 926.5 L548.3 924.2 L546 923.7 Z" fill="#7a3838"/>
<path d="M548 926.5 L550.3 926.3 L550.3 924.5 L548 924.2 Z" fill="#7a3838"/>
<path d="M550 926.3 L552.3 926.1 L552.3 924.8 L550 924.5 Z" fill="#7a3838"/>
<path d="M552 926.1 L554.3 926 L554.3 925.1 L552 924.8 Z" fill="#7a3838"/>
<path d="M554 926 L556.3 925.8 L556.3 925.3 L554 925.1 Z" fill="#7a3838"/>
<path d="M556 925.8 L558.3 925.5 L558.3 925.3 L556 925.3 Z" fill="#7a3838"/>
<path d="M562 924.9 L564.3 924.6 L564.3 925.3 L562 925.3 Z" fill="#000060"/>
<path d="M564 924.6 L566.3 924.2 L566.3 925.1 L564 925.3 Z" fill="#000060"/>
<path d="M566 924.2 L568.3 923.7 L568.3 924.8 L566 925.1 Z" fill="#000060"/>
<path d="M568 923.7 L570.3 923.2 L570.3 924.5 L568 924.8 Z" fill="#000060"/>
<path d="M570 923.2 L572.3 922.6 L572.3 924.2 L570 924.5 Z" fill="#000060"/>
<path d="M572 922.6 L574.3 922.2 L574.3 923.9 L572 924.2 Z" fill="#000060"/>
<path d="M574 922.2 L576.3 921.8 L576.3 923.5 L574 923.9 Z" fill="#000060"/>
<path d="M576 921.8 L578.3 921.5 L578.3 923.1 L576 923.5 Z" fill="#000060"/>
<path d="M578 921.5 L580.3 921.2 L580.3 922.7 L578 923.1 Z" fill="#000060"/>
<path d="M580 921.2 L582.3 920.8 L582.3 922.3 L580 922.7 Z" fill="#000060"/>
<path d="M582 920.8 L584.3 921.1 L584.3 922.1 L582 922.3 Z" fill="#000060"/>
<path d="M584 921.1 L586.3 921.5 L586.3 922 L584 922.1 Z" fill="#000060"/>
<path d="M586 921.5 L588.3 921.8 L588.3 921.8 L586 922 Z" fill="#000060"/>
<path d="M588 921.8 L590.3 922.1 L590.3 921.6 L588 921.8 Z" fill="#7a3838"/>
<path d="M590 922.1 L592.3 922.3 L592.3 921.6 L590 921.6 Z" fill="#7a3838"/>
<path d="M592 922.3 L594.3 922.2 L594.3 921.6 L592 921.6 Z" fill="#7a3838"/>
<path d="M594 922.2 L596.3 922.1 L596.3 921.7 L594 921.6 Z" fill="#7a3838"/>
<path d="M596 922.1 L598.3 922.1 L598.3 921.7 L596 921.7 Z" fill="#7a3838"/>
<path d="M598 922.1 L600.3 922 L600.3 921.8 L598 921.7 Z" fill="#7a3838"/>
<path d="M602 921.4 L604.3 920.8 L604.3 921.4 L602 921.6 Z" fill="#000060"/>
<path d="M604 920.8 L606.3 920.2 L606.3 921.2 L604 921.4 Z" fill="#000060"/>
<path d="M606 920.2 L608.3 919.4 L608.3 920.9 L606 921.2 Z" fill="#000060"/>
<path d="M608 919.4 L610.3 918.5 L610.3 920.4 L608 920.9 Z" fill="#000060"/>
<path d="M610 918.5 L612.3 917.6 L612.3 920 L610 920.4 Z" fill="#000060"/>
<path d="M612 917.6 L614.3 916.7 L614.3 919.5 L612 920 Z" fill="#000060"/>
<path d="M614 916.7 L616.3 915.8 L616.3 919 L614 919.5 Z" fill="#000060"/>
<path d="M616 915.8 L618.3 913.7 L618.3 917.7 L616 919 Z" fill="#000060"/>
<path d="M618 913.7 L620.3 911.6 L620.3 916.4 L618 917.7 Z" fill="#000060"/>
<path d="M620 911.6 L622.3 909.5 L622.3 915.1 L620 916.4 Z" fill="#000060"/>
<path d="M622 909.5 L624.3 907.3 L624.3 913.8 L622 915.1 Z" fill="#000060"/>
<path d="M624 907.3 L626.3 905.2 L626.3 912.1 L624 913.8 Z" fill="#000060"/>
<path d="M626 905.2 L628.3 902.9 L628.3 910.2 L626 912.1 Z" fill="#000060"/>
<path d="M628 902.9 L630.3 900.7 L630.3 908.2 L628 910.2 Z" fill="#000060"/>
<path d="M630 900.7 L632.3 898.4 L632.3 906.3 L630 908.2 Z" fill="#000060"/>
<path d="M632 898.4 L634.3 896.7 L634.3 904.5 L632 906.3 Z" fill="#000060"/>
<path d="M634 896.7 L636.3 895.6 L636.3 903 L634 904.5 Z" fill="#000060"/>
<path d="M636 895.6 L638.3 894.5 L638.3 901.5 L636 903 Z" fill="#000060"/>
<path d="M638 894.5 L640.3 893.5 L640.3 900 L638 901.5 Z" fill="#000060"/>
<path d="M640 893.5 L642.3 892.4 L642.3 898.5 L640 900 Z" fill="#000060"/>
<path d="M642 892.4 L644.3 891.3 L644.3 897.1 L642 898.5 Z" fill="#000060"/>
<path d="M644 891.3 L646.3 890.3 L646.3 895.7 L644 897.1 Z" fill="#000060"/>
<path d="M646 890.3 L648.3 889.3 L648.3 894.3 L646 895.7 Z" fill="#000060"/>
<path d="M648 889.3 L650.3 888.3 L650.3 893 L648 894.3 Z" fill="#000060"/>
<path d="M650 888.3 L652.3 887.4 L652.3 891.7 L650 893 Z" fill="#000060"/>
<path d="M652 887.4 L654.3 886.9 L654.3 890.7 L652 891.7 Z" fill="#000060"/>
<path d="M654 886.9 L656.3 886.4 L656.3 889.6 L654 890.7 Z" fill="#000060"/>
<path d="M656 886.4 L658.3 885.8 L658.3 888.5 L656 889.6 Z" fill="#000060"/>
<path d="M658 885.8 L660.3 885 L660.3 887.6 L658 888.5 Z" fill="#000060"/>
<path d="M660 885 L662.3 884 L662.3 886.7 L660 887.6 Z" fill="#000060"/>
<path d="M662 884 L664.3 883.1 L664.3 885.9 L662 886.7 Z" fill="#000060"/>
<path d="M664 883.1 L666.3 882.1 L666.3 885 L664 885.9 Z" fill="#000060"/>
<path d="M666 882.1 L668.3 881.4 L668.3 884.3 L666 885 Z" fill="#000060"/>
<path d="M668 881.4 L670.3 881.4 L670.3 883.7 L668 884.3 Z" fill="#000060"/>
<path d="M670 881.4 L672.3 881.4 L672.3 883.2 L670 883.7 Z" fill="#000060"/>
<path d="M672 881.4 L674.3 881.4 L674.3 882.7 L672 883.2 Z" fill="#000060"/>
<path d="M674 881.4 L676.3 881.4 L676.3 882.2 L674 882.7 Z" fill="#000060"/>
<path d="M676 881.4 L678.3 881.2 L678.3 881.9 L676 882.2 Z" fill="#000060"/>
<path d="M678 881.2 L680.3 880.9 L680.3 881.6 L678 881.9 Z" fill="#000060"/>
<path d="M680 880.9 L682.3 880.7 L682.3 881.3 L680 881.6 Z" fill="#000060"/>
<path d="M682 880.7 L684.3 880.5 L684.3 881 L682 881.3 Z" fill="#000060"/>
<path d="M684 880.5 L686.3 880.5 L686.3 880.9 L684 881 Z" fill="#000060"/>
<path d="M686 880.5 L688.3 880.7 L688.3 880.9 L686 880.9 Z" fill="#000060"/>
<path d="M692 881.2 L694.3 881.3 L694.3 880.8 L692 880.9 Z" fill="#7a3838"/>
<path d="M696 880.3 L698.3 879.4 L698.3 880.2 L696 880.5 Z" fill="#000060"/>
<path d="M698 879.4 L700.3 878.4 L700.3 879.8 L698 880.2 Z" fill="#000060"/>
<path d="M700 878.4 L702.3 877.4 L702.3 879.5 L700 879.8 Z" fill="#000060"/>
<path d="M702 877.4 L704.3 877.1 L704.3 879.2 L702 879.5 Z" fill="#000060"/>
<path d="M704 877.1 L706.3 877.1 L706.3 879 L704 879.2 Z" fill="#000060"/>
<path d="M706 877.1 L708.3 877.1 L708.3 878.7 L706 879 Z" fill="#000060"/>
<path d="M708 877.1 L710.3 877.1 L710.3 878.5 L708 878.7 Z" fill="#000060"/>
<path d="M710 877.1 L712.3 876.9 L712.3 878.2 L710 878.5 Z" fill="#000060"/>
<path d="M712 876.9 L714.3 876 L714.3 877.7 L712 878.2 Z" fill="#000060"/>
<path d="M714 876 L716.3 875.1 L716.3 877.1 L714 877.7 Z" fill="#000060"/>
<path d="M716 875.1 L718.3 874.3 L718.3 876.6 L716 877.1 Z" fill="#000060"/>
<path d="M718 874.3 L720.3 873.7 L720.3 876.1 L718 876.6 Z" fill="#000060"/>
<path d="M720 873.7 L722.3 873.6 L722.3 875.7 L720 876.1 Z" fill="#000060"/>
<path d="M722 873.6 L724.3 873.4 L724.3 875.3 L722 875.7 Z" fill="#000060"/>
<path d="M724 873.4 L726.3 873.2 L726.3 874.9 L724 875.3 Z" fill="#000060"/>
<path d="M726 873.2 L728.3 873 L728.3 874.5 L726 874.9 Z" fill="#000060"/>
<path d="M728 873 L730.3 871.9 L730.3 873.8 L728 874.5 Z" fill="#000060"/>
<path d="M730 871.9 L732.3 870.9 L732.3 873 L730 873.8 Z" fill="#000060"/>
<path d="M732 870.9 L734.3 869.9 L734.3 872.3 L732 873 Z" fill="#000060"/>
<path d="M734 869.9 L736.3 868.8 L736.3 871.5 L734 872.3 Z" fill="#000060"/>
<path d="M736 868.8 L738.3 868.5 L738.3 871 L736 871.5 Z" fill="#000060"/>
<path d="M738 868.5 L740.3 868.4 L740.3 870.6 L738 871 Z" fill="#000060"/>
<path d="M740 868.4 L742.3 868.2 L742.3 870.2 L740 870.6 Z" fill="#000060"/>
<path d="M742 868.2 L744.3 868.1 L744.3 869.8 L742 870.2 Z" fill="#000060"/>
<path d="M744 868.1 L746.3 868.1 L746.3 869.5 L744 869.8 Z" fill="#000060"/>
<path d="M746 868.1 L748.3 868.1 L748.3 869.3 L746 869.5 Z" fill="#000060"/>
<path d="M748 868.1 L750.3 868.1 L750.3 869 L748 869.3 Z" fill="#000060"/>
<path d="M750 868.1 L752.3 868.1 L752.3 868.8 L750 869 Z" fill="#000060"/>
<path d="M752 868.1 L754.3 868.1 L754.3 868.6 L752 868.8 Z" fill="#000060"/>
<path d="M754 868.1 L756.3 868.3 L756.3 868.5 L754 868.6 Z" fill="#000060"/>
<path d="M760 868.7 L762.3 869 L762.3 868.3 L760 868.4 Z" fill="#7a3838"/>
<path d="M762 869 L764.3 868.5 L764.3 868.1 L762 868.3 Z" fill="#7a3838"/>
<path d="M766 867.5 L768.3 866.5 L768.3 867.4 L766 867.8 Z" fill="#000060"/>
<path d="M768 866.5 L770.3 865.5 L770.3 867.1 L768 867.4 Z" fill="#000060"/>
<path d="M770 865.5 L772.3 865.5 L772.3 866.8 L770 867.1 Z" fill="#000060"/>
<path d="M772 865.5 L774.3 865.5 L774.3 866.6 L772 866.8 Z" fill="#000060"/>
<path d="M774 865.5 L776.3 865.5 L776.3 866.4 L774 866.6 Z" fill="#000060"/>
<path d="M776 865.5 L778.3 865.5 L778.3 866.1 L776 866.4 Z" fill="#000060"/>
<path d="M778 865.5 L780.3 865.4 L780.3 865.9 L778 866.1 Z" fill="#000060"/>
<path d="M780 865.4 L782.3 865.2 L782.3 865.7 L780 865.9 Z" fill="#000060"/>
<path d="M782 865.2 L784.3 865 L784.3 865.5 L782 865.7 Z" fill="#000060"/>
<path d="M784 865 L786.3 864.7 L786.3 865.2 L784 865.5 Z" fill="#000060"/>
<path d="M786 864.7 L788.3 864.6 L788.3 865 L786 865.2 Z" fill="#000060"/>
<path d="M788 864.6 L790.3 864.8 L790.3 865 L788 865 Z" fill="#000060"/>
<path d="M794 865.3 L796.3 865.5 L796.3 865 L794 865 Z" fill="#7a3838"/>
<path d="M796 865.5 L798.3 865.5 L798.3 865.1 L796 865 Z" fill="#7a3838"/>
<path d="M798 865.5 L800.3 865.5 L800.3 865.1 L798 865.1 Z" fill="#7a3838"/>
<path d="M800 865.5 L802.3 865.5 L802.3 865.2 L800 865.1 Z" fill="#7a3838"/>
<path d="M802 865.5 L804.3 865.5 L804.3 865.3 L802 865.2 Z" fill="#7a3838"/>
<path d="M804 865.5 L806.3 866 L806.3 865.5 L804 865.3 Z" fill="#7a3838"/>
<path d="M806 866 L808.3 867 L808.3 865.9 L806 865.5 Z" fill="#7a3838"/>
<path d="M808 867 L810.3 868 L810.3 866.3 L808 865.9 Z" fill="#7a3838"/>
<path d="M810 868 L812.3 869.1 L812.3 866.7 L810 866.3 Z" fill="#7a3838"/>
<path d="M812 869.1 L814.3 870.1 L814.3 867.1 L812 866.7 Z" fill="#7a3838"/>
<path d="M814 870.1 L816.3 871.1 L816.3 867.8 L814 867.1 Z" fill="#7a3838"/>
<path d="M816 871.1 L818.3 872.2 L818.3 868.4 L816 867.8 Z" fill="#7a3838"/>
<path d="M818 872.2 L820.3 873.2 L820.3 869.1 L818 868.4 Z" fill="#7a3838"/>
<path d="M820 873.2 L822.3 874.2 L822.3 869.8 L820 869.1 Z" fill="#7a3838"/>
<path d="M822 874.2 L824.3 875.4 L824.3 870.8 L822 869.8 Z" fill="#7a3838"/>
<path d="M824 875.4 L826.3 876.6 L826.3 871.9 L824 870.8 Z" fill="#7a3838"/>
<path d="M826 876.6 L828.3 877.9 L828.3 873.1 L826 871.9 Z" fill="#7a3838"/>
<path d="M828 877.9 L830.3 879.2 L830.3 874.2 L828 873.1 Z" fill="#7a3838"/>
<path d="M830 879.2 L832.3 880.4 L832.3 875.4 L830 874.2 Z" fill="#7a3838"/>
<path d="M832 880.4 L834.3 881.7 L834.3 876.5 L832 875.4 Z" fill="#7a3838"/>
<path d="M834 881.7 L836.3 882.9 L836.3 877.6 L834 876.5 Z" fill="#7a3838"/>
<path d="M836 882.9 L838.3 884.2 L838.3 878.8 L836 877.6 Z" fill="#7a3838"/>
<path d="M838 884.2 L840.3 885.4 L840.3 879.9 L838 878.8 Z" fill="#7a3838"/>
<path d="M840 885.4 L842.3 887 L842.3 881.3 L840 879.9 Z" fill="#7a3838"/>
<path d="M842 887 L844.3 888.6 L844.3 882.7 L842 881.3 Z" fill="#7a3838"/>
<path d="M844 888.6 L846.3 890.2 L846.3 884.2 L844 882.7 Z" fill="#7a3838"/>
<path d="M846 890.2 L848.3 891.8 L848.3 885.6 L846 884.2 Z" fill="#7a3838"/>
<path d="M848 891.8 L850.3 893.3 L850.3 887 L848 885.6 Z" fill="#7a3838"/>
<path d="M850 893.3 L852.3 894.7 L852.3 888.5 L850 887 Z" fill="#7a3838"/>
<path d="M852 894.7 L854.3 896.2 L854.3 889.9 L852 888.5 Z" fill="#7a3838"/>
<path d="M854 896.2 L856.3 897.6 L856.3 891.3 L854 889.9 Z" fill="#7a3838"/>
<path d="M856 897.6 L858.3 899 L858.3 892.7 L856 891.3 Z" fill="#7a3838"/>
<path d="M858 899 L860.3 900.5 L860.3 894.2 L858 892.7 Z" fill="#7a3838"/>
<path d="M860 900.5 L862.3 901.9 L862.3 895.6 L860 894.2 Z" fill="#7a3838"/>
<path d="M862 901.9 L864.3 903.3 L864.3 897 L862 895.6 Z" fill="#7a3838"/>
<path d="M864 903.3 L866.3 904.7 L866.3 898.5 L864 897 Z" fill="#7a3838"/>
<path d="M866 904.7 L868.3 906.1 L868.3 899.9 L866 898.5 Z" fill="#7a3838"/>
<path d="M868 906.1 L870.3 907.5 L870.3 901.3 L868 899.9 Z" fill="#7a3838"/>
<path d="M870 907.5 L872.3 908.9 L872.3 902.7 L870 901.3 Z" fill="#7a3838"/>
<path d="M872 908.9 L874.3 910.2 L874.3 904.2 L872 902.7 Z" fill="#7a3838"/>
<path d="M874 910.2 L876.3 911.7 L876.3 905.7 L874 904.2 Z" fill="#7a3838"/>
<path d="M876 911.7 L878.3 913.4 L878.3 907.3 L876 905.7 Z" fill="#7a3838"/>
<path d="M878 913.4 L880.3 915.2 L880.3 909 L878 907.3 Z" fill="#7a3838"/>
<path d="M880 915.2 L882.3 916.9 L882.3 910.7 L880 909 Z" fill="#7a3838"/>
<path d="M882 916.9 L884.3 918.3 L884.3 912.1 L882 910.7 Z" fill="#7a3838"/>
<path d="M884 918.3 L886.3 919.3 L886.3 913.2 L884 912.1 Z" fill="#7a3838"/>
<path d="M886 919.3 L888.3 920.3 L888.3 914.4 L886 913.2 Z" fill="#7a3838"/>
<path d="M888 920.3 L890.3 921.4 L890.3 915.5 L888 914.4 Z" fill="#7a3838"/>
<path d="M890 921.4 L892.3 922.4 L892.3 916.6 L890 915.5 Z" fill="#7a3838"/>
<path d="M892 922.4 L894.3 923.1 L894.3 917.8 L892 916.6 Z" fill="#7a3838"/>
<path d="M894 923.1 L896.3 923.7 L896.3 918.9 L894 917.8 Z" fill="#7a3838"/>
<path d="M896 923.7 L898.3 924.4 L898.3 920.1 L896 918.9 Z" fill="#7a3838"/>
<path d="M898 924.4 L900.3 925.1 L900.3 921.2 L898 920.1 Z" fill="#7a3838"/>
<path d="M900 925.1 L902.3 925.5 L902.3 922.1 L900 921.2 Z" fill="#7a3838"/>
<path d="M902 925.5 L904.3 925.8 L904.3 922.8 L902 922.1 Z" fill="#7a3838"/>
<path d="M904 925.8 L906.3 926.1 L906.3 923.6 L904 922.8 Z" fill="#7a3838"/>
<path d="M906 926.1 L908.3 926.4 L908.3 924.3 L906 923.6 Z" fill="#7a3838"/>
<path d="M908 926.4 L910.3 926.6 L910.3 924.9 L908 924.3 Z" fill="#7a3838"/>
<path d="M910 926.6 L912.3 926.8 L912.3 925.3 L910 924.9 Z" fill="#7a3838"/>
<path d="M912 926.8 L914.3 927 L914.3 925.7 L912 925.3 Z" fill="#7a3838"/>
<path d="M914 927 L916.3 927.1 L916.3 926.1 L914 925.7 Z" fill="#7a3838"/>
<path d="M916 927.1 L918.3 927.3 L918.3 926.5 L916 926.1 Z" fill="#7a3838"/>
<path d="M918 927.3 L920.3 927.8 L920.3 926.9 L918 926.5 Z" fill="#7a3838"/>
<path d="M920 927.8 L922.3 928.3 L922.3 927.2 L920 926.9 Z" fill="#7a3838"/>
<path d="M922 928.3 L924.3 928.8 L924.3 927.5 L922 927.2 Z" fill="#7a3838"/>
<path d="M924 928.8 L926.3 929.3 L926.3 927.8 L924 927.5 Z" fill="#7a3838"/>
<path d="M926 929.3 L928.3 929.1 L928.3 928 L926 927.8 Z" fill="#7a3838"/>
<path d="M928 929.1 L930.3 928.9 L930.3 928.2 L928 928 Z" fill="#7a3838"/>
<path d="M930 928.9 L932.3 928.6 L932.3 928.3 L930 928.2 Z" fill="#7a3838"/>
<path d="M934 928.4 L936.3 928 L936.3 928.5 L934 928.5 Z" fill="#000060"/>
<path d="M936 928 L938.3 927.6 L938.3 928.4 L936 928.5 Z" fill="#000060"/>
<path d="M938 927.6 L940.3 927.2 L940.3 928.3 L938 928.4 Z" fill="#000060"/>
<path d="M940 927.2 L942.3 926.8 L942.3 928.1 L940 928.3 Z" fill="#000060"/>
<path d="M942 926.8 L944.3 926.6 L944.3 928 L942 928.1 Z" fill="#000060"/>
<path d="M944 926.6 L946.3 926.8 L946.3 927.8 L944 928 Z" fill="#000060"/>
<path d="M946 926.8 L948.3 927 L948.3 927.7 L946 927.8 Z" fill="#000060"/>
<path d="M948 927 L950.3 927.1 L950.3 927.5 L948 927.7 Z" fill="#000060"/>
<path d="M954 927.5 L956.3 927.7 L956.3 927.3 L954 927.3 Z" fill="#7a3838"/>
<path d="M956 927.7 L958.3 927.8 L958.3 927.3 L956 927.3 Z" fill="#7a3838"/>
<path d="M958 927.8 L960.3 928 L960.3 927.3 L958 927.3 Z" fill="#7a3838"/>
<path d="M960 928 L962.3 928.1 L962.3 927.4 L960 927.3 Z" fill="#7a3838"/>
<path d="M962 928.1 L964.3 928.2 L964.3 927.5 L962 927.4 Z" fill="#7a3838"/>
<path d="M964 928.2 L966.3 928.2 L966.3 927.6 L964 927.5 Z" fill="#7a3838"/>
<path d="M966 928.2 L968.3 928.3 L968.3 927.7 L966 927.6 Z" fill="#7a3838"/>
<path d="M968 928.3 L970.3 928.3 L970.3 927.8 L968 927.7 Z" fill="#7a3838"/>
<path d="M970 928.3 L972.3 928.3 L972.3 928 L970 927.8 Z" fill="#7a3838"/>
<path d="M972 928.3 L974.3 928.3 L974.3 928.1 L972 928 Z" fill="#7a3838"/>
<path d="M982 927.9 L984.3 927.7 L984.3 928.2 L982 928.2 Z" fill="#000060"/>
<path d="M984 927.7 L986.3 927.5 L986.3 928.1 L984 928.2 Z" fill="#000060"/>
<path d="M986 927.5 L988.3 927 L988.3 927.9 L986 928.1 Z" fill="#000060"/>
<path d="M988 927 L990.3 926.3 L990.3 927.6 L988 927.9 Z" fill="#000060"/>
<path d="M990 926.3 L992.3 925.6 L992.3 927.3 L990 927.6 Z" fill="#000060"/>
<path d="M992 925.6 L994.3 924.8 L994.3 926.9 L992 927.3 Z" fill="#000060"/>
<path d="M994 924.8 L996.3 924.2 L996.3 926.5 L994 926.9 Z" fill="#000060"/>
<path d="M996 924.2 L998.3 923.7 L998.3 926 L996 926.5 Z" fill="#000060"/>
<path d="M998 923.7 L1000.3 923.2 L1000.3 925.5 L998 926 Z" fill="#000060"/>
<path d="M1000 923.2 L1002.3 922.7 L1002.3 924.9 L1000 925.5 Z" fill="#000060"/>
<path d="M1002 922.7 L1004.3 922.1 L1004.3 924.4 L1002 924.9 Z" fill="#000060"/>
<path d="M1004 922.1 L1006.3 921.2 L1006.3 923.7 L1004 924.4 Z" fill="#000060"/>
<path d="M1006 921.2 L1008.3 920.2 L1008.3 923 L1006 923.7 Z" fill="#000060"/>
<path d="M1008 920.2 L1010.3 919.3 L1010.3 922.3 L1008 923 Z" fill="#000060"/>
<path d="M1010 919.3 L1012.3 918.4 L1012.3 921.6 L1010 922.3 Z" fill="#000060"/>
<path d="M1012 918.4 L1014.3 916.5 L1014.3 920.6 L1012 921.6 Z" fill="#000060"/>
<path d="M1014 916.5 L1016.3 914.4 L1016.3 919.4 L1014 920.6 Z" fill="#000060"/>
<path d="M1016 914.4 L1018.3 912.3 L1018.3 918.3 L1016 919.4 Z" fill="#000060"/>
<path d="M1018 912.3 L1020.3 910.1 L1020.3 917.1 L1018 918.3 Z" fill="#000060"/>
<path d="M1020 910.1 L1022.3 908.4 L1022.3 915.9 L1020 917.1 Z" fill="#000060"/>
<path d="M1022 908.4 L1024.3 907.1 L1024.3 914.4 L1022 915.9 Z" fill="#000060"/>
<path d="M1024 907.1 L1026.3 905.8 L1026.3 913 L1024 914.4 Z" fill="#000060"/>
<path d="M1026 905.8 L1028.3 904.5 L1028.3 911.6 L1026 913 Z" fill="#000060"/>
<path d="M1028 904.5 L1030.3 903.2 L1030.3 910.2 L1028 911.6 Z" fill="#000060"/>
<path d="M1030 903.2 L1032.3 902.4 L1032.3 908.6 L1030 910.2 Z" fill="#000060"/>
<path d="M1032 902.4 L1034.3 901.7 L1034.3 907.1 L1032 908.6 Z" fill="#000060"/>
<path d="M1034 901.7 L1036.3 901 L1036.3 905.6 L1034 907.1 Z" fill="#000060"/>
<path d="M1036 901 L1038.3 900.3 L1038.3 904.1 L1036 905.6 Z" fill="#000060"/>
<path d="M1038 900.3 L1040.3 900.7 L1040.3 903.5 L1038 904.1 Z" fill="#000060"/>
<path d="M1040 900.7 L1042.3 901.2 L1042.3 902.9 L1040 903.5 Z" fill="#000060"/>
<path d="M1042 901.2 L1044.3 901.7 L1044.3 902.3 L1042 902.9 Z" fill="#000060"/>
<path d="M1046 902.2 L1048.3 902.3 L1048.3 901.7 L1046 901.8 Z" fill="#7a3838"/>
<path d="M1048 902.3 L1050.3 902.4 L1050.3 901.7 L1048 901.7 Z" fill="#7a3838"/>
<path d="M1050 902.4 L1052.3 902.5 L1052.3 901.7 L1050 901.7 Z" fill="#7a3838"/>
<path d="M1052 902.5 L1054.3 902.7 L1054.3 901.7 L1052 901.7 Z" fill="#7a3838"/>
<path d="M1054 902.7 L1056.3 903.7 L1056.3 902.1 L1054 901.7 Z" fill="#7a3838"/>
<path d="M1056 903.7 L1058.3 905.6 L1058.3 902.9 L1056 902.1 Z" fill="#7a3838"/>
<path d="M1058 905.6 L1060.3 907.6 L1060.3 903.7 L1058 902.9 Z" fill="#7a3838"/>
<path d="M1060 907.6 L1062.3 909.5 L1062.3 904.5 L1060 903.7 Z" fill="#7a3838"/>
<path d="M1062 909.5 L1064.3 911.4 L1064.3 905.4 L1062 904.5 Z" fill="#7a3838"/>
<path d="M1064 911.4 L1066.3 913.2 L1066.3 906.6 L1064 905.4 Z" fill="#7a3838"/>
<path d="M1066 913.2 L1068.3 915 L1068.3 907.9 L1066 906.6 Z" fill="#7a3838"/>
<path d="M1068 915 L1070.3 916.8 L1070.3 909.1 L1068 907.9 Z" fill="#7a3838"/>
<path d="M1070 916.8 L1072.3 918.5 L1072.3 910.4 L1070 909.1 Z" fill="#7a3838"/>
<path d="M1072 918.5 L1074.3 919.2 L1074.3 911.7 L1072 910.4 Z" fill="#7a3838"/>
<path d="M1074 919.2 L1076.3 919.5 L1076.3 913 L1074 911.7 Z" fill="#7a3838"/>
<path d="M1076 919.5 L1078.3 919.8 L1078.3 914.3 L1076 913 Z" fill="#7a3838"/>
<path d="M1078 919.8 L1080.3 920.1 L1080.3 915.6 L1078 914.3 Z" fill="#7a3838"/>
<path d="M1080 920.1 L1082.3 919.8 L1082.3 916.6 L1080 915.6 Z" fill="#7a3838"/>
<path d="M1082 919.8 L1084.3 918.4 L1084.3 916.9 L1082 916.6 Z" fill="#7a3838"/>
<path d="M1084 918.4 L1086.3 917 L1086.3 917.2 L1084 916.9 Z" fill="#7a3838"/>
<path d="M1086 917 L1088.3 915.5 L1088.3 917.6 L1086 917.2 Z" fill="#000060"/>
<path d="M1088 915.5 L1090.3 914.3 L1090.3 917.6 L1088 917.6 Z" fill="#000060"/>
<path d="M1090 914.3 L1092.3 913.6 L1092.3 917 L1090 917.6 Z" fill="#000060"/>
<path d="M1092 913.6 L1094.3 913 L1094.3 916.4 L1092 917 Z" fill="#000060"/>
<path d="M1094 913 L1096.3 912.3 L1096.3 915.8 L1094 916.4 Z" fill="#000060"/>
<path d="M1096 912.3 L1098.3 911.7 L1098.3 915.2 L1096 915.8 Z" fill="#000060"/>
<path d="M1098 911.7 L1100.3 911.4 L1100.3 914.5 L1098 915.2 Z" fill="#000060"/>
<path d="M1100 911.4 L1102.3 911 L1102.3 913.8 L1100 914.5 Z" fill="#000060"/>
<path d="M1102 911 L1104.3 910.7 L1104.3 913.1 L1102 913.8 Z" fill="#000060"/>
<path d="M1104 910.7 L1106.3 910.3 L1106.3 912.4 L1104 913.1 Z" fill="#000060"/>
<path d="M1106 910.3 L1108.3 909.8 L1108.3 911.8 L1106 912.4 Z" fill="#000060"/>
<path d="M1108 909.8 L1110.3 909.2 L1110.3 911.2 L1108 911.8 Z" fill="#000060"/>
<path d="M1110 909.2 L1112.3 908.7 L1112.3 910.7 L1110 911.2 Z" fill="#000060"/>
<path d="M1112 908.7 L1114.3 908.1 L1114.3 910.1 L1112 910.7 Z" fill="#000060"/>
<path d="M1114 908.1 L1116.3 907.5 L1116.3 909.6 L1114 910.1 Z" fill="#000060"/>
<path d="M1116 907.5 L1118.3 907 L1118.3 909.1 L1116 909.6 Z" fill="#000060"/>
<path d="M1118 907 L1120.3 906.5 L1120.3 908.7 L1118 909.1 Z" fill="#000060"/>
<path d="M1120 906.5 L1122.3 906 L1122.3 908.2 L1120 908.7 Z" fill="#000060"/>
<path d="M1122 906 L1124.3 905.5 L1124.3 907.7 L1122 908.2 Z" fill="#000060"/>
<path d="M1124 905.5 L1126.3 904.7 L1126.3 907.2 L1124 907.7 Z" fill="#000060"/>
<path d="M1126 904.7 L1128.3 903.9 L1128.3 906.6 L1126 907.2 Z" fill="#000060"/>
<path d="M1128 903.9 L1130.3 903.1 L1130.3 906 L1128 906.6 Z" fill="#000060"/>
<path d="M1130 903.1 L1132.3 902.3 L1132.3 905.5 L1130 906 Z" fill="#000060"/>
<path d="M1132 902.3 L1134.3 901.6 L1134.3 904.8 L1132 905.5 Z" fill="#000060"/>
<path d="M1134 901.6 L1136.3 901 L1136.3 904.1 L1134 904.8 Z" fill="#000060"/>
<path d="M1136 901 L1138.3 900.3 L1138.3 903.4 L1136 904.1 Z" fill="#000060"/>
<path d="M1138 900.3 L1140.3 899.7 L1140.3 902.8 L1138 903.4 Z" fill="#000060"/>
<path d="M1140 899.7 L1142.3 899 L1142.3 902 L1140 902.8 Z" fill="#000060"/>
<path d="M1142 899 L1144.3 897.7 L1144.3 901.1 L1142 902 Z" fill="#000060"/>
<path d="M1144 897.7 L1146.3 896.4 L1146.3 900.1 L1144 901.1 Z" fill="#000060"/>
<path d="M1146 896.4 L1148.3 895.1 L1148.3 899.1 L1146 900.1 Z" fill="#000060"/>
<path d="M1148 895.1 L1150.3 893.9 L1150.3 898.2 L1148 899.1 Z" fill="#000060"/>
<path d="M1150 893.9 L1152.3 893.3 L1152.3 897.4 L1150 898.2 Z" fill="#000060"/>
<path d="M1152 893.3 L1154.3 892.8 L1154.3 896.6 L1152 897.4 Z" fill="#000060"/>
<path d="M1154 892.8 L1156.3 892.2 L1156.3 895.8 L1154 896.6 Z" fill="#000060"/>
<path d="M1156 892.2 L1158.3 891.6 L1158.3 895 L1156 895.8 Z" fill="#000060"/>
<path d="M1158 891.6 L1160.3 892.2 L1160.3 892.7 L1158 895 Z" fill="#000060"/>
<path d="M1160 892.2 L1162.3 893 L1162.3 893 L1160 892.7 Z" fill="#000060"/>
<path d="M1164 893.8 L1166.3 894.6 L1166.3 893.7 L1164 893.3 Z" fill="#7a3838"/>
<path d="M1166 894.6 L1168.3 895.7 L1168.3 894.1 L1166 893.7 Z" fill="#7a3838"/>
<path d="M1168 895.7 L1170.3 897.9 L1170.3 895.1 L1168 894.1 Z" fill="#7a3838"/>
<path d="M1170 897.9 L1172.3 900.1 L1172.3 896 L1170 895.1 Z" fill="#7a3838"/>
<path d="M1172 900.1 L1174.3 902.2 L1174.3 897 L1172 896 Z" fill="#7a3838"/>
<path d="M1174 902.2 L1176.3 904.4 L1176.3 898.1 L1174 897 Z" fill="#7a3838"/>
<path d="M1176 904.4 L1178.3 906.3 L1178.3 899.8 L1176 898.1 Z" fill="#7a3838"/>
<path d="M1178 906.3 L1180.3 908.1 L1180.3 901.5 L1178 899.8 Z" fill="#7a3838"/>
<path d="M1180 908.1 L1182.3 910 L1182.3 903.2 L1180 901.5 Z" fill="#7a3838"/>
<path d="M1182 910 L1184.3 911.9 L1184.3 904.9 L1182 903.2 Z" fill="#7a3838"/>
<path d="M1184 911.9 L1186.3 913.4 L1186.3 906.6 L1184 904.9 Z" fill="#7a3838"/>
<path d="M1186 913.4 L1188.3 914.9 L1188.3 908.3 L1186 906.6 Z" fill="#7a3838"/>
<path d="M1188 914.9 L1190.3 916.4 L1190.3 910 L1188 908.3 Z" fill="#7a3838"/>
<path d="M1190 916.4 L1192.3 917.8 L1192.3 911.7 L1190 910 Z" fill="#7a3838"/>
<path d="M1192 917.8 L1194.3 918.6 L1194.3 913.1 L1192 911.7 Z" fill="#7a3838"/>
<path d="M1194 918.6 L1196.3 919 L1196.3 914.4 L1194 913.1 Z" fill="#7a3838"/>
<path d="M1196 919 L1198.3 919.5 L1198.3 915.6 L1196 914.4 Z" fill="#7a3838"/>
<path d="M1198 919.5 L1200.3 920 L1200.3 916.9 L1198 915.6 Z" fill="#7a3838"/>
<path d="M1200 920 L1202.3 920.2 L1202.3 917.9 L1200 916.9 Z" fill="#7a3838"/>
<path d="M1202 920.2 L1204.3 919.7 L1204.3 918.1 L1202 917.9 Z" fill="#7a3838"/>
<path d="M1204 919.7 L1206.3 919.2 L1206.3 918.4 L1204 918.1 Z" fill="#7a3838"/>
<path d="M1206 919.2 L1208.3 918.8 L1208.3 918.7 L1206 918.4 Z" fill="#7a3838"/>
<path d="M1208 918.8 L1210.3 918.3 L1210.3 919 L1208 918.7 Z" fill="#000060"/>
<path d="M1210 918.3 L1212.3 917.5 L1212.3 918.7 L1210 919 Z" fill="#000060"/>
<path d="M1212 917.5 L1214.3 916.7 L1214.3 918.3 L1212 918.7 Z" fill="#000060"/>
<path d="M1214 916.7 L1216.3 915.8 L1216.3 917.9 L1214 918.3 Z" fill="#000060"/>
<path d="M1216 915.8 L1218.3 914.9 L1218.3 917.5 L1216 917.9 Z" fill="#000060"/>
<path d="M1218 914.9 L1220.3 913.5 L1220.3 916.7 L1218 917.5 Z" fill="#000060"/>
<path d="M1220 913.5 L1222.3 911.3 L1222.3 915.6 L1220 916.7 Z" fill="#000060"/>
<path d="M1222 911.3 L1224.3 909.2 L1224.3 914.4 L1222 915.6 Z" fill="#000060"/>
<path d="M1224 909.2 L1226.3 907.1 L1226.3 913.3 L1224 914.4 Z" fill="#000060"/>
<path d="M1226 907.1 L1228.3 905 L1228.3 912.1 L1226 913.3 Z" fill="#000060"/>
<path d="M1228 905 L1230.3 902.6 L1230.3 910.2 L1228 912.1 Z" fill="#000060"/>
<path d="M1230 902.6 L1232.3 900.2 L1232.3 908.3 L1230 910.2 Z" fill="#000060"/>
<path d="M1232 900.2 L1234.3 897.8 L1234.3 906.4 L1232 908.3 Z" fill="#000060"/>
<path d="M1234 897.8 L1236.3 895.4 L1236.3 904.5 L1234 906.4 Z" fill="#000060"/>
<path d="M1236 895.4 L1238.3 894.1 L1238.3 902.8 L1236 904.5 Z" fill="#000060"/>
<path d="M1238 894.1 L1240.3 893.4 L1240.3 901 L1238 902.8 Z" fill="#000060"/>
<path d="M1240 893.4 L1242.3 892.7 L1242.3 899.3 L1240 901 Z" fill="#000060"/>
<path d="M1242 892.7 L1244.3 891.9 L1244.3 897.6 L1242 899.3 Z" fill="#000060"/>
<path d="M1244 891.9 L1246.3 891.2 L1246.3 896 L1244 897.6 Z" fill="#000060"/>
<path d="M1246 891.2 L1248.3 890.4 L1248.3 894.8 L1246 896 Z" fill="#000060"/>
<path d="M1248 890.4 L1250.3 889.7 L1250.3 893.5 L1248 894.8 Z" fill="#000060"/>
<path d="M1250 889.7 L1252.3 888.9 L1252.3 892.3 L1250 893.5 Z" fill="#000060"/>
<path d="M1252 888.9 L1254.3 888.1 L1254.3 891.2 L1252 892.3 Z" fill="#000060"/>
<path d="M1254 888.1 L1256.3 887.3 L1256.3 890.3 L1254 891.2 Z" fill="#000060"/>
<path d="M1256 887.3 L1258.3 886.4 L1258.3 889.4 L1256 890.3 Z" fill="#000060"/>
<path d="M1258 886.4 L1260.3 885.6 L1260.3 888.6 L1258 889.4 Z" fill="#000060"/>
<path d="M1260 885.6 L1262.3 884.7 L1262.3 887.7 L1260 888.6 Z" fill="#000060"/>
<path d="M1262 884.7 L1264.3 883.9 L1264.3 887 L1262 887.7 Z" fill="#000060"/>
<path d="M1264 883.9 L1266.3 883.1 L1266.3 886.3 L1264 887 Z" fill="#000060"/>
<path d="M1266 883.1 L1268.3 882.3 L1268.3 885.5 L1266 886.3 Z" fill="#000060"/>
<path d="M1268 882.3 L1270.3 881.6 L1270.3 884.8 L1268 885.5 Z" fill="#000060"/>
<path d="M1270 881.6 L1272.3 881.1 L1272.3 884.2 L1270 884.8 Z" fill="#000060"/>
<path d="M1272 881.1 L1274.3 880.9 L1274.3 883.6 L1272 884.2 Z" fill="#000060"/>
<path d="M1274 880.9 L1276.3 880.6 L1276.3 883.1 L1274 883.6 Z" fill="#000060"/>
<path d="M1276 880.6 L1278.3 880.3 L1278.3 882.5 L1276 883.1 Z" fill="#000060"/>
<path d="M1278 880.3 L1280.3 879.6 L1280.3 881.8 L1278 882.5 Z" fill="#000060"/>
<path d="M1280 879.6 L1282.3 878.2 L1282.3 880.9 L1280 881.8 Z" fill="#000060"/>
<path d="M1282 878.2 L1284.3 876.9 L1284.3 880 L1282 880.9 Z" fill="#000060"/>
<path d="M1284 876.9 L1286.3 875.5 L1286.3 879 L1284 880 Z" fill="#000060"/>
<path d="M1286 875.5 L1288.3 874.1 L1288.3 878.1 L1286 879 Z" fill="#000060"/>
<path d="M1288 874.1 L1290.3 873.1 L1290.3 877.3 L1288 878.1 Z" fill="#000060"/>
<path d="M1290 873.1 L1292.3 872.1 L1292.3 876.5 L1290 877.3 Z" fill="#000060"/>
<path d="M1292 872.1 L1294.3 871 L1294.3 875.7 L1292 876.5 Z" fill="#000060"/>
<path d="M1294 871 L1296.3 870 L1296.3 874.9 L1294 875.7 Z" fill="#000060"/>
<path d="M1296 870 L1298.3 869.6 L1298.3 874.2 L1296 874.9 Z" fill="#000060"/>
<path d="M1298 869.6 L1300.3 869.6 L1300.3 873.4 L1298 874.2 Z" fill="#000060"/>
<path d="M1300 869.6 L1302.3 869.6 L1302.3 872.7 L1300 873.4 Z" fill="#000060"/>
<path d="M1302 869.6 L1304.3 869.6 L1304.3 871.9 L1302 872.7 Z" fill="#000060"/>
<path d="M1304 869.6 L1306.3 869.6 L1306.3 871.2 L1304 871.9 Z" fill="#000060"/>
<path d="M1306 869.6 L1308.3 869.6 L1308.3 870.8 L1306 871.2 Z" fill="#000060"/>
<path d="M1308 869.6 L1310.3 869.6 L1310.3 870.4 L1308 870.8 Z" fill="#000060"/>
<path d="M1310 869.6 L1312.3 869.6 L1312.3 869.9 L1310 870.4 Z" fill="#000060"/>
<path d="M1322 869.6 L1324.3 870.4 L1324.3 869.8 L1322 869.6 Z" fill="#7a3838"/>
<path d="M1324 870.4 L1326.3 871.4 L1326.3 870 L1324 869.8 Z" fill="#7a3838"/>
<path d="M1326 871.4 L1328.3 872.4 L1328.3 870.2 L1326 870 Z" fill="#7a3838"/>
<path d="M1328 872.4 L1330.3 873.4 L1330.3 870.5 L1328 870.2 Z" fill="#7a3838"/>
<path d="M1330 873.4 L1332.3 874.3 L1332.3 870.9 L1330 870.5 Z" fill="#7a3838"/>
<path d="M1332 874.3 L1334.3 875 L1334.3 871.5 L1332 870.9 Z" fill="#7a3838"/>
<path d="M1334 875 L1336.3 875.8 L1336.3 872.1 L1334 871.5 Z" fill="#7a3838"/>
<path d="M1336 875.8 L1338.3 876.5 L1338.3 872.6 L1336 872.1 Z" fill="#7a3838"/>
<path d="M1338 876.5 L1340.3 877.2 L1340.3 873.3 L1338 872.6 Z" fill="#7a3838"/>
<path d="M1340 877.2 L1342.3 877.7 L1342.3 874 L1340 873.3 Z" fill="#7a3838"/>
<path d="M1342 877.7 L1344.3 878.2 L1344.3 874.7 L1342 874 Z" fill="#7a3838"/>
<path d="M1344 878.2 L1346.3 878.8 L1346.3 875.5 L1344 874.7 Z" fill="#7a3838"/>
<path d="M1346 878.8 L1348.3 879.3 L1348.3 876.2 L1346 875.5 Z" fill="#7a3838"/>
<path d="M1348 879.3 L1350.3 880.2 L1350.3 877.1 L1348 876.2 Z" fill="#7a3838"/>
<path d="M1350 880.2 L1352.3 881.2 L1352.3 877.9 L1350 877.1 Z" fill="#7a3838"/>
<path d="M1352 881.2 L1354.3 882.3 L1354.3 878.8 L1352 877.9 Z" fill="#7a3838"/>
<path d="M1354 882.3 L1356.3 883.3 L1356.3 879.6 L1354 878.8 Z" fill="#7a3838"/>
<path d="M1356 883.3 L1358.3 884.8 L1358.3 880.7 L1356 879.6 Z" fill="#7a3838"/>
<path d="M1358 884.8 L1360.3 886.8 L1360.3 881.9 L1358 880.7 Z" fill="#7a3838"/>
<path d="M1360 886.8 L1362.3 888.8 L1362.3 883.2 L1360 881.9 Z" fill="#7a3838"/>
<path d="M1362 888.8 L1364.3 890.8 L1364.3 884.4 L1362 883.2 Z" fill="#7a3838"/>
<path d="M1364 890.8 L1366.3 892.8 L1366.3 885.7 L1364 884.4 Z" fill="#7a3838"/>
<path d="M1366 892.8 L1368.3 895.1 L1368.3 887.6 L1366 885.7 Z" fill="#7a3838"/>
<path d="M1368 895.1 L1370.3 897.4 L1370.3 889.5 L1368 887.6 Z" fill="#7a3838"/>
<path d="M1370 897.4 L1372.3 899.8 L1372.3 891.3 L1370 889.5 Z" fill="#7a3838"/>
<path d="M1372 899.8 L1374.3 902 L1374.3 893.2 L1372 891.3 Z" fill="#7a3838"/>
<path d="M1374 902 L1376.3 903.8 L1376.3 895.2 L1374 893.2 Z" fill="#7a3838"/>
<path d="M1376 903.8 L1378.3 905.6 L1378.3 897.2 L1376 895.2 Z" fill="#7a3838"/>
<path d="M1378 905.6 L1380.3 907.5 L1380.3 899.2 L1378 897.2 Z" fill="#7a3838"/>
<path d="M1380 907.5 L1382.3 909.3 L1382.3 901.2 L1380 899.2 Z" fill="#7a3838"/>
<path d="M1382 909.3 L1384.3 911.2 L1384.3 903.1 L1382 901.2 Z" fill="#7a3838"/>
<path d="M1384 911.2 L1386.3 913.1 L1386.3 905 L1384 903.1 Z" fill="#7a3838"/>
<path d="M1386 913.1 L1388.3 914.9 L1388.3 906.9 L1386 905 Z" fill="#7a3838"/>
<path d="M1388 914.9 L1390.3 916.8 L1390.3 908.8 L1388 906.9 Z" fill="#7a3838"/>
<path d="M1390 916.8 L1392.3 918.6 L1392.3 910.6 L1390 908.8 Z" fill="#7a3838"/>
<path d="M1392 918.6 L1394.3 920.3 L1394.3 912.5 L1392 910.6 Z" fill="#7a3838"/>
<path d="M1394 920.3 L1396.3 922.1 L1396.3 914.3 L1394 912.5 Z" fill="#7a3838"/>
<path d="M1396 922.1 L1398.3 923.8 L1398.3 916.1 L1396 914.3 Z" fill="#7a3838"/>
<path d="M1398 923.8 L1400.3 925.4 L1400.3 917.9 L1398 916.1 Z" fill="#7a3838"/>
<path d="M1400 925.4 L1402.3 926.1 L1402.3 919.3 L1400 917.9 Z" fill="#7a3838"/>
<path d="M1402 926.1 L1404.3 926.7 L1404.3 920.8 L1402 919.3 Z" fill="#7a3838"/>
<path d="M1404 926.7 L1406.3 927.4 L1406.3 922.2 L1404 920.8 Z" fill="#7a3838"/>
<path d="M1406 927.4 L1408.3 928.1 L1408.3 923.6 L1406 922.2 Z" fill="#7a3838"/>
<path d="M1408 928.1 L1410.3 928.2 L1410.3 924.6 L1408 923.6 Z" fill="#7a3838"/>
<path d="M1410 928.2 L1412.3 928.1 L1412.3 925.3 L1410 924.6 Z" fill="#7a3838"/>
<path d="M1412 928.1 L1414.3 928 L1414.3 926.1 L1412 925.3 Z" fill="#7a3838"/>
<path d="M1414 928 L1416.3 927.9 L1416.3 926.8 L1414 926.1 Z" fill="#7a3838"/>
<path d="M1416 927.9 L1418.3 927.8 L1418.3 927.4 L1416 926.8 Z" fill="#7a3838"/>
<path d="M1418 927.8 L1420.3 927.7 L1420.3 927.5 L1418 927.4 Z" fill="#7a3838"/>
<path d="M1424 927.4 L1426.3 927.3 L1426.3 927.8 L1424 927.7 Z" fill="#000060"/>
<path d="M1426 927.3 L1428.3 926.6 L1428.3 927.6 L1426 927.8 Z" fill="#000060"/>
<path d="M1428 926.6 L1430.3 925.9 L1430.3 927.3 L1428 927.6 Z" fill="#000060"/>
<path d="M1430 925.9 L1432.3 925.1 L1432.3 927 L1430 927.3 Z" fill="#000060"/>
<path d="M1432 925.1 L1434.3 924.4 L1434.3 926.7 L1432 927 Z" fill="#000060"/>
<path d="M1434 924.4 L1436.3 923.7 L1436.3 926.3 L1434 926.7 Z" fill="#000060"/>
<path d="M1436 923.7 L1438.3 923.1 L1438.3 925.7 L1436 926.3 Z" fill="#000060"/>
<path d="M1438 923.1 L1440.3 922.5 L1440.3 925.1 L1438 925.7 Z" fill="#000060"/>
<path d="M1440 922.5 L1442.3 921.8 L1442.3 924.5 L1440 925.1 Z" fill="#000060"/>
<path d="M1442 921.8 L1444.3 921.3 L1444.3 924 L1442 924.5 Z" fill="#000060"/>
<path d="M1444 921.3 L1446.3 921.4 L1446.3 923.6 L1444 924 Z" fill="#000060"/>
<path d="M1446 921.4 L1448.3 921.4 L1448.3 923.1 L1446 923.6 Z" fill="#000060"/>
<path d="M1448 921.4 L1450.3 921.5 L1450.3 922.7 L1448 923.1 Z" fill="#000060"/>
<path d="M1450 921.5 L1452.3 921.5 L1452.3 922.3 L1450 922.7 Z" fill="#000060"/>
<path d="M1452 921.5 L1454.3 921.7 L1454.3 922.1 L1452 922.3 Z" fill="#000060"/>
<path d="M1454 921.7 L1456.3 921.8 L1456.3 922 L1454 922.1 Z" fill="#000060"/>
<path d="M1460 922 L1462.3 921.8 L1462.3 921.5 L1460 921.6 Z" fill="#7a3838"/>
<path d="M1466 920.9 L1468.3 920.5 L1468.3 921.1 L1466 921.2 Z" fill="#000060"/>
<path d="M1468 920.5 L1470.3 920.4 L1470.3 921 L1468 921.1 Z" fill="#000060"/>
<path d="M1470 920.4 L1472.3 920.6 L1472.3 921 L1470 921 Z" fill="#000060"/>
<path d="M1472 920.6 L1474.3 920.9 L1474.3 921 L1472 921 Z" fill="#000060"/>
<path d="M1478 921 L1480.3 919.3 L1480.3 920.4 L1478 920.9 Z" fill="#000060"/>
<path d="M1480 919.3 L1482.3 917.7 L1482.3 919.8 L1480 920.4 Z" fill="#000060"/>
<path d="M1482 917.7 L1484.3 916 L1484.3 919.2 L1482 919.8 Z" fill="#000060"/>
<path d="M1484 916 L1486.3 914.4 L1486.3 918.7 L1484 919.2 Z" fill="#000060"/>
<path d="M1486 914.4 L1488.3 912 L1488.3 917.5 L1486 918.7 Z" fill="#000060"/>
<path d="M1488 912 L1490.3 909.4 L1490.3 916.2 L1488 917.5 Z" fill="#000060"/>
<path d="M1490 909.4 L1492.3 906.8 L1492.3 914.9 L1490 916.2 Z" fill="#000060"/>
<path d="M1492 906.8 L1494.3 904.3 L1494.3 913.6 L1492 914.9 Z" fill="#000060"/>
<path d="M1494 904.3 L1496.3 901.8 L1496.3 911.9 L1494 913.6 Z" fill="#000060"/>
<path d="M1496 901.8 L1498.3 899.4 L1498.3 909.6 L1496 911.9 Z" fill="#000060"/>
<path d="M1498 899.4 L1500.3 897 L1500.3 907.3 L1498 909.6 Z" fill="#000060"/>
<path d="M1500 897 L1502.3 894.6 L1502.3 905 L1500 907.3 Z" fill="#000060"/>
<path d="M1502 894.6 L1504.3 892.2 L1504.3 902.7 L1502 905 Z" fill="#000060"/>
<path d="M1504 892.2 L1506.3 889.7 L1506.3 900.3 L1504 902.7 Z" fill="#000060"/>
<path d="M1506 889.7 L1508.3 887.3 L1508.3 897.9 L1506 900.3 Z" fill="#000060"/>
<path d="M1508 887.3 L1510.3 884.8 L1510.3 895.5 L1508 897.9 Z" fill="#000060"/>
<path d="M1510 884.8 L1512.3 882.3 L1512.3 893.1 L1510 895.5 Z" fill="#000060"/>
<path d="M1512 882.3 L1514.3 879.7 L1514.3 890.5 L1512 893.1 Z" fill="#000060"/>
<path d="M1514 879.7 L1516.3 877.1 L1516.3 887.9 L1514 890.5 Z" fill="#000060"/>
<path d="M1516 877.1 L1518.3 874.4 L1518.3 885.2 L1516 887.9 Z" fill="#000060"/>
<path d="M1518 874.4 L1520.3 871.7 L1520.3 882.5 L1518 885.2 Z" fill="#000060"/>
<path d="M1520 871.7 L1522.3 870.8 L1522.3 880.4 L1520 882.5 Z" fill="#000060"/>
<path d="M1522 870.8 L1524.3 871.1 L1524.3 878.8 L1522 880.4 Z" fill="#000060"/>
<path d="M1524 871.1 L1526.3 871.5 L1526.3 877.1 L1524 878.8 Z" fill="#000060"/>
<path d="M1526 871.5 L1528.3 871.9 L1528.3 875.5 L1526 877.1 Z" fill="#000060"/>
<path d="M1528 871.9 L1530.3 872.2 L1530.3 874.2 L1528 875.5 Z" fill="#000060"/>
<path d="M1530 872.2 L1532.3 872.3 L1532.3 873.3 L1530 874.2 Z" fill="#000060"/>
<path d="M1532 872.3 L1534.3 872.5 L1534.3 872.4 L1532 873.3 Z" fill="#000060"/>
<line x1="0" y1="876.5" x2="1535" y2="876.5" stroke="#2c2cd8" stroke-width="1"/>
<line x1="0" y1="918.5" x2="1535" y2="918.5" stroke="#2c2cd8" stroke-width="1"/>
<polyline fill="none" stroke="#d65c5c" stroke-width="1.1" stroke-dasharray="4.5 3.5" points="0,916.5 12.6,906.5 21.3,899.4 30.1,896.4 38.9,895.7 46.5,896.4 55.2,897.7 62.8,896.4 72.8,891.4 82.9,883.9 91.7,878.1 100.4,873.8 113,870.1 130.6,868.3 145.6,867.6 160.7,868.8 168.2,869.6 177,872.1 185.8,877.1 194.6,882.6 203.4,888.9 212.2,893.9 219.7,898.2 227.2,900.2 236,902 244.8,903.2 253.6,907.7 262.4,909.7 271.2,912 279.2,910.7 287.5,911 296.3,910.2 305.1,912.8 313.9,916.5 322.7,919.8 331.5,922 340.2,924.1 349,923.3 357.8,922.8 366.6,921 375.4,920.3 380,919.8 391.3,917.3 400.1,913.3 408.9,905.2 417.7,897.2 426.5,889.4 434.5,884.6 442.8,885.6 451.6,893.2 460.4,904 469.1,914 477.9,921.5 486.7,925.3 495.5,926.6 504.3,924.1 513.1,921.3 521.9,919.3 530.7,919.8 539.4,921 547,924.1 555.8,925.3 564.6,925.3 573.3,924.1 582.1,922.3 590.9,921.5 599.7,921.8 607.2,921 616,919 624.8,913.3 633.1,905.2 642.4,898.2 651.2,892.2 658.7,888.1 667.5,884.4 676.3,882.1 685.1,880.9 693.9,880.9 702.7,879.4 711.5,878.4 719,876.3 727.8,874.6 736.6,871.3 745.3,869.6 754.1,868.6 762.9,868.3 770,867.1 778.8,866 787.6,865 796.4,865 805.2,865.3 813.9,867.1 822.7,870.1 831.5,875.1 840.3,880.1 849.1,886.4 857.9,892.7 866.7,898.9 875.5,905.2 883,911.5 891.8,916.5 900.6,921.5 909.4,924.8 918.1,926.6 926.2,927.8 934.5,928.6 943.3,928.1 952,927.3 960.8,927.3 969.6,927.8 978.4,928.3 987.2,928.1 994.7,926.8 1003.5,924.6 1012.3,921.5 1021.1,916.5 1029.9,910.2 1038.2,904 1046.2,901.7 1055,901.7 1063.8,905.2 1072.6,910.7 1081.4,916.5 1089.4,917.8 1097.7,915.3 1106.5,912.3 1115.3,909.7 1124,907.7 1132.8,905.2 1141.6,902.2 1149.9,898.2 1158.7,894.7 1160,892.7 1167.5,893.9 1175.6,897.7 1184.4,905.2 1192.6,912.3 1201.4,917.8 1210.2,919 1219,917.3 1227.8,912.3 1236.6,904 1245.4,896.4 1253.4,891.4 1262.2,887.6 1270.5,884.6 1279.3,882.1 1288.1,878.1 1296.8,874.6 1305.6,871.3 1313.7,869.6 1322.5,869.6 1330.7,870.6 1339.5,873.1 1348.3,876.3 1357.1,880.1 1365.9,885.6 1373.4,892.7 1382.2,901.5 1391,909.7 1399.8,917.8 1408.6,924.1 1417.4,927.3 1426.2,927.8 1435,926.6 1443.7,924.1 1452,922.3 1460.8,921.5 1468.9,921 1477.6,921 1486.4,918.5 1495.2,912.8 1504,902.7 1512.8,892.2 1520.8,881.4 1529.1,874.6 1534.6,872.1"/>
<polyline fill="none" stroke="#f0f0f0" stroke-width="1.2" stroke-linejoin="round" points="0,910.7 12.6,897.2 21.3,895.2 30.1,897.2 38.9,895.2 46.5,896.2 55.2,899.4 62.8,893.9 72.8,884.6 82.9,878.1 91.7,873.8 100.4,870.6 113,868.1 130.6,867.6 145.6,867.1 160.7,869.6 168.2,871.3 177,876.3 185.8,882.6 194.6,888.4 203.4,894.7 212.2,897.7 219.7,901 227.2,900.4 236,905.2 244.8,905.2 253.6,912.3 262.4,911.2 271.2,912.3 279.2,909 287.5,911.2 296.3,910.2 305.1,916.5 313.9,919.8 322.7,922.3 331.5,923.3 340.2,925.6 349,922.3 357.8,921.3 366.6,919.8 375.4,919.3 380,919.5 391.3,915.8 400.1,906.5 408.9,897.2 417.7,889.4 426.5,882.6 434.5,882.6 442.8,893.2 451.6,904 460.4,914.5 469.1,922 477.9,927.3 486.7,926.6 495.5,925.3 504.3,921.3 513.1,918.8 521.9,918.8 530.7,921.3 539.4,924.1 547,926.6 555.8,925.8 564.6,924.6 573.3,922.3 582.1,920.8 590.9,922.3 599.7,922 607.2,919.8 616,915.8 624.8,906.5 633.1,897.2 642.4,892.2 651.2,887.6 658.7,885.6 667.5,881.4 676.3,881.4 685.1,880.4 693.9,881.4 702.7,877.1 711.5,877.1 719,873.8 727.8,873.1 736.6,868.6 745.3,868.1 754.1,868.1 762.9,869.1 770,865.5 778.8,865.5 787.6,864.5 796.4,865.5 805.2,865.5 813.9,870.1 822.7,874.6 831.5,880.1 840.3,885.6 849.1,892.7 857.9,898.9 866.7,905.2 875.5,911.2 883,917.8 891.8,922.3 900.6,925.3 909.4,926.6 918.1,927.3 926.2,929.3 934.5,928.3 943.3,926.6 952,927.3 960.8,928.1 969.6,928.3 978.4,928.3 987.2,927.3 994.7,924.6 1003.5,922.3 1012.3,918.3 1021.1,909 1029.9,903.2 1038.2,900.2 1046.2,902.2 1055,902.7 1063.8,911.2 1072.6,919 1081.4,920.3 1089.4,914.5 1097.7,911.7 1106.5,910.2 1115.3,907.7 1124,905.5 1132.8,902 1141.6,899.2 1149.9,893.9 1158.7,891.4 1160,892.2 1167.5,895.2 1175.6,904 1184.4,912.3 1192.6,918.3 1201.4,920.3 1210.2,918.3 1219,914.5 1227.8,905.2 1236.6,894.7 1245.4,891.4 1253.4,888.4 1262.2,884.6 1270.5,881.4 1279.3,880.1 1288.1,874.1 1296.8,869.6 1305.6,869.6 1313.7,869.6 1322.5,869.6 1330.7,873.8 1339.5,877.1 1348.3,879.4 1357.1,883.9 1365.9,892.7 1373.4,901.5 1382.2,909.5 1391,917.8 1399.8,925.3 1408.6,928.3 1417.4,927.8 1426.2,927.3 1435,924.1 1443.7,921.3 1452,921.5 1460.8,922 1468.9,920.3 1477.6,921.3 1486.4,914 1495.2,902.7 1504,892.2 1512.8,881.4 1520.8,870.6 1529.1,872.1 1534.6,872.6"/>
</g>
<rect x="0" y="859" width="159.5" height="16.6" fill="url(#hdg)"/>
<path d="M159.0 859 V875.1 H0" fill="none" stroke="#7f9db2" stroke-width="1"/>
<text x="1.5" y="871" class="hd" textLength="103.5" lengthAdjust="spacingAndGlyphs">Stochastique (11 5 3)</text>
<use href="#wrench" x="109.5" y="860.1"/>
<use href="#win" x="126" y="860.1"/>
<use href="#xc" x="143" y="860.1"/>
<rect x="1535" y="31" width="58" height="924" fill="#ffffff"/>
<rect x="0" y="935" width="1593" height="20" fill="#ffffff"/>
<rect x="1534" y="31" width="1" height="905" fill="#6f8c9c"/>
<rect x="0" y="935" width="1535" height="1" fill="#6f8c9c"/>
<rect x="1535" y="762" width="58" height="4" fill="#fff"/>
<rect x="1535" y="54" width="4" height="1" fill="#55707e"/>
<text x="1541.6" y="57.9" class="ax" textLength="32" lengthAdjust="spacingAndGlyphs">12 685</text>
<rect x="1535" y="93" width="4" height="1" fill="#55707e"/>
<text x="1541.6" y="96.9" class="ax" textLength="32" lengthAdjust="spacingAndGlyphs">12 680</text>
<rect x="1535" y="133" width="4" height="1" fill="#55707e"/>
<text x="1541.6" y="136.9" class="ax" textLength="32" lengthAdjust="spacingAndGlyphs">12 675</text>
<rect x="1535" y="172" width="4" height="1" fill="#55707e"/>
<text x="1541.6" y="175.9" class="ax" textLength="32" lengthAdjust="spacingAndGlyphs">12 670</text>
<rect x="1535" y="212" width="4" height="1" fill="#55707e"/>
<text x="1541.6" y="215.9" class="ax" textLength="32" lengthAdjust="spacingAndGlyphs">12 665</text>
<rect x="1535" y="251" width="4" height="1" fill="#55707e"/>
<text x="1541.6" y="254.9" class="ax" textLength="32" lengthAdjust="spacingAndGlyphs">12 660</text>
<rect x="1535" y="290" width="4" height="1" fill="#55707e"/>
<text x="1541.6" y="293.9" class="ax" textLength="32" lengthAdjust="spacingAndGlyphs">12 655</text>
<rect x="1535" y="330" width="4" height="1" fill="#55707e"/>
<text x="1541.6" y="333.9" class="axb" textLength="36.5" lengthAdjust="spacingAndGlyphs">12 650</text>
<rect x="1535" y="369" width="4" height="1" fill="#55707e"/>
<text x="1541.6" y="372.9" class="ax" textLength="32" lengthAdjust="spacingAndGlyphs">12 645</text>
<rect x="1535" y="409" width="4" height="1" fill="#55707e"/>
<text x="1541.6" y="412.9" class="ax" textLength="32" lengthAdjust="spacingAndGlyphs">12 640</text>
<rect x="1535" y="448" width="4" height="1" fill="#55707e"/>
<text x="1541.6" y="451.9" class="ax" textLength="32" lengthAdjust="spacingAndGlyphs">12 635</text>
<rect x="1535" y="487" width="4" height="1" fill="#55707e"/>
<text x="1541.6" y="490.9" class="ax" textLength="32" lengthAdjust="spacingAndGlyphs">12 630</text>
<rect x="1535" y="527" width="4" height="1" fill="#55707e"/>
<text x="1541.6" y="530.9" class="ax" textLength="32" lengthAdjust="spacingAndGlyphs">12 625</text>
<rect x="1535" y="566" width="4" height="1" fill="#55707e"/>
<text x="1541.6" y="569.9" class="ax" textLength="32" lengthAdjust="spacingAndGlyphs">12 620</text>
<rect x="1535" y="605" width="4" height="1" fill="#55707e"/>
<text x="1541.6" y="608.9" class="ax" textLength="32" lengthAdjust="spacingAndGlyphs">12 615</text>
<rect x="1535" y="645" width="4" height="1" fill="#55707e"/>
<text x="1541.6" y="648.9" class="ax" textLength="32" lengthAdjust="spacingAndGlyphs">12 610</text>
<rect x="1535" y="684" width="4" height="1" fill="#55707e"/>
<text x="1541.6" y="687.9" class="ax" textLength="32" lengthAdjust="spacingAndGlyphs">12 605</text>
<rect x="1535" y="724" width="4" height="1" fill="#55707e"/>
<text x="1541.6" y="727.9" class="axb" textLength="36.5" lengthAdjust="spacingAndGlyphs">12 600</text>
<rect x="1535" y="770" width="4" height="1" fill="#55707e"/>
<rect x="1535" y="786" width="4" height="1" fill="#55707e"/>
<rect x="1535" y="802" width="4" height="1" fill="#55707e"/>
<rect x="1535" y="835" width="4" height="1" fill="#55707e"/>
<rect x="1535" y="778" width="2.5" height="1" fill="#55707e"/>
<rect x="1535" y="794" width="2.5" height="1" fill="#55707e"/>
<rect x="1535" y="811" width="2.5" height="1" fill="#55707e"/>
<rect x="1535" y="819" width="2.5" height="1" fill="#55707e"/>
<rect x="1535" y="827" width="2.5" height="1" fill="#55707e"/>
<rect x="1535" y="843" width="2.5" height="1" fill="#55707e"/>
<text x="1541.8" y="776" class="axb" textLength="19.4" lengthAdjust="spacingAndGlyphs">100</text>
<text x="1541.6" y="790.1" class="ax" textLength="10.8" lengthAdjust="spacingAndGlyphs">80</text>
<text x="1541.6" y="806.2" class="ax" textLength="10.8" lengthAdjust="spacingAndGlyphs">60</text>
<text x="1541.6" y="839.3" class="ax" textLength="10.8" lengthAdjust="spacingAndGlyphs">20</text>
<rect x="1539.5" y="812.5" width="36" height="15" fill="#000" stroke="#5c7484" stroke-width="1"/>
<text x="1541.9" y="823.8" textLength="31.4" lengthAdjust="spacingAndGlyphs" fill="#fff">38,605</text>
<rect x="1535" y="862" width="4" height="1" fill="#55707e"/>
<text x="1541.8" y="867.8" class="axb" textLength="19.4" lengthAdjust="spacingAndGlyphs">100</text>
<text x="1541.6" y="900.2" class="ax" textLength="10.8" lengthAdjust="spacingAndGlyphs">50</text>
<rect x="1535" y="910" width="5" height="1" fill="#e04040"/>
<rect x="1539" y="896" width="37" height="15" fill="#181818" stroke="#5c7484" stroke-width="1"/>
<text x="1541.9" y="907.2" textLength="31.4" lengthAdjust="spacingAndGlyphs" fill="#e25c50">30,825</text>
<rect x="1539" y="911" width="37" height="15" fill="#000" stroke="#5c7484" stroke-width="1"/>
<text x="1541.9" y="922.4" textLength="31.4" lengthAdjust="spacingAndGlyphs" fill="#fff">29,868</text>
<rect x="55" y="935" width="1" height="5" fill="#55707e"/>
<text x="42.7" y="951.7" class="ax" textLength="25.6" lengthAdjust="spacingAndGlyphs">09:15</text>
<rect x="158" y="935" width="1" height="5" fill="#55707e"/>
<text x="145.7" y="951.7" class="ax" textLength="25.6" lengthAdjust="spacingAndGlyphs">09:18</text>
<rect x="227" y="935" width="1" height="5" fill="#55707e"/>
<text x="214.7" y="951.7" class="ax" textLength="25.6" lengthAdjust="spacingAndGlyphs">09:21</text>
<rect x="279" y="935" width="1" height="5" fill="#55707e"/>
<text x="266.7" y="951.7" class="ax" textLength="25.6" lengthAdjust="spacingAndGlyphs">09:24</text>
<rect x="331" y="935" width="1" height="5" fill="#55707e"/>
<text x="318.7" y="951.7" class="ax" textLength="25.6" lengthAdjust="spacingAndGlyphs">09:27</text>
<rect x="391" y="935" width="1" height="5" fill="#55707e"/>
<text x="378.7" y="951.7" class="ax" textLength="25.6" lengthAdjust="spacingAndGlyphs">09:30</text>
<rect x="443" y="935" width="1" height="5" fill="#55707e"/>
<text x="430.7" y="951.7" class="ax" textLength="25.6" lengthAdjust="spacingAndGlyphs">09:33</text>
<rect x="529" y="935" width="1" height="5" fill="#55707e"/>
<text x="516.7" y="951.7" class="ax" textLength="25.6" lengthAdjust="spacingAndGlyphs">09:36</text>
<rect x="615" y="935" width="1" height="5" fill="#55707e"/>
<text x="602.7" y="951.7" class="ax" textLength="25.6" lengthAdjust="spacingAndGlyphs">09:39</text>
<rect x="684" y="935" width="1" height="5" fill="#55707e"/>
<text x="671.7" y="951.7" class="ax" textLength="25.6" lengthAdjust="spacingAndGlyphs">09:42</text>
<rect x="736" y="935" width="1" height="5" fill="#55707e"/>
<text x="723.7" y="951.7" class="ax" textLength="25.6" lengthAdjust="spacingAndGlyphs">09:45</text>
<rect x="813" y="935" width="1" height="5" fill="#55707e"/>
<text x="800.7" y="951.7" class="ax" textLength="25.6" lengthAdjust="spacingAndGlyphs">09:48</text>
<rect x="874" y="935" width="1" height="5" fill="#55707e"/>
<text x="861.7" y="951.7" class="ax" textLength="25.6" lengthAdjust="spacingAndGlyphs">09:51</text>
<rect x="917" y="935" width="1" height="5" fill="#55707e"/>
<text x="904.7" y="951.7" class="ax" textLength="25.6" lengthAdjust="spacingAndGlyphs">09:54</text>
<rect x="1012" y="935" width="1" height="5" fill="#55707e"/>
<text x="999.7" y="951.7" class="ax" textLength="25.6" lengthAdjust="spacingAndGlyphs">09:57</text>
<rect x="1072" y="935" width="1" height="5" fill="#55707e"/>
<text x="1057.8" y="951.7" class="axb" textLength="29.5" lengthAdjust="spacingAndGlyphs">10:00</text>
<rect x="1132" y="935" width="1" height="5" fill="#55707e"/>
<text x="1119.7" y="951.7" class="ax" textLength="25.6" lengthAdjust="spacingAndGlyphs">10:03</text>
<rect x="1175" y="935" width="1" height="5" fill="#55707e"/>
<text x="1162.7" y="951.7" class="ax" textLength="25.6" lengthAdjust="spacingAndGlyphs">10:06</text>
<rect x="1236" y="935" width="1" height="5" fill="#55707e"/>
<text x="1223.7" y="951.7" class="ax" textLength="25.6" lengthAdjust="spacingAndGlyphs">10:09</text>
<rect x="1287" y="935" width="1" height="5" fill="#55707e"/>
<text x="1274.7" y="951.7" class="ax" textLength="25.6" lengthAdjust="spacingAndGlyphs">10:12</text>
<rect x="1348" y="935" width="1" height="5" fill="#55707e"/>
<text x="1335.7" y="951.7" class="ax" textLength="25.6" lengthAdjust="spacingAndGlyphs">10:15</text>
<rect x="1399" y="935" width="1" height="5" fill="#55707e"/>
<text x="1386.7" y="951.7" class="ax" textLength="25.6" lengthAdjust="spacingAndGlyphs">10:18</text>
<rect x="1486" y="935" width="1" height="5" fill="#55707e"/>
<text x="1473.7" y="951.7" class="ax" textLength="25.6" lengthAdjust="spacingAndGlyphs">10:21</text>
<rect x="256.5" y="4.5" width="75.5" height="21" rx="3" fill="#fff" stroke="#8a9aa6" stroke-width="1"/>
<rect x="314.5" y="7" width="15" height="8" rx="1.5" fill="url(#btn)"/>
<path d="M319.0 12.5 L322.0 9 L325.0 12.5 Z" fill="#111"/>
<path d="M319.5 18 L322.0 21 L324.5 18 Z" fill="none" stroke="#8a9aa6" stroke-width="0.8"/>
<text x="313.5" y="19" text-anchor="end" fill="#111" style="font-size:11px">1</text>
<rect x="334.0" y="4.5" width="84.5" height="21" rx="3" fill="#fff" stroke="#8a9aa6" stroke-width="1"/>
<rect x="400.0" y="7" width="16" height="16" rx="2" fill="url(#btn)"/>
<path d="M404.0 13 L408.0 17.5 L412.0 13 Z" fill="#111"/>
<text x="337" y="19" textLength="41" lengthAdjust="spacingAndGlyphs" fill="#111">(x) jours</text>
<rect x="759.5" y="4.5" width="76" height="21" rx="3" fill="#fff" stroke="#8a9aa6" stroke-width="1"/>
<rect x="818" y="7" width="15" height="8" rx="1.5" fill="url(#btn)"/>
<path d="M822.5 12.5 L825.5 9 L828.5 12.5 Z" fill="#111"/>
<rect x="818" y="15.5" width="15" height="8" rx="1.5" fill="url(#btn)"/>
<path d="M822.5 17.5 L825.5 21 L828.5 17.5 Z" fill="#111"/>
<text x="817" y="19" text-anchor="end" fill="#111" style="font-size:11px">80</text>
<rect x="837.0" y="4.5" width="88" height="21" rx="3" fill="#fff" stroke="#8a9aa6" stroke-width="1"/>
<rect x="906.5" y="7" width="16" height="16" rx="2" fill="url(#btn)"/>
<path d="M910.5 13 L914.5 17.5 L918.5 13 Z" fill="#111"/>
<text x="840" y="19" textLength="38.4" lengthAdjust="spacingAndGlyphs" fill="#111">(x) ticks</text>
<rect x="1265.9" y="1.9" width="48.2" height="26.4" rx="3" fill="url(#wb)" stroke="#7a92a2" stroke-width="1.2"/>
<line x1="1300.5" y1="2" x2="1300.5" y2="28" stroke="#8a9aa6"/>
<path d="M1303.9 14.1 L1307.45 18.1 L1311 14.1 Z" fill="#000"/>
<g><path d="M1268.1 16.6 C1272 13 1275 6 1278.8 6.2 C1280 6.3 1280.5 7 1281.6 8.6 C1277 11 1274 18.5 1270.9 18.5 C1269.5 18.4 1268.6 17.8 1268.1 17.3 Z" fill="#f8c8c8"/><path d="M1281.6 8.6 C1284 12 1285 21 1287.1 21.3 C1288.6 21.3 1290 18.5 1291.3 16.7 C1288 13 1286 9.2 1283.4 9.2 Z" fill="#c4f0c4"/><path d="M1291.3 16.7 C1294 13.5 1296 10 1297.7 5.6 L1297.7 14.3 C1296.5 16.5 1295 17.8 1293.9 17.7 C1293 17.6 1292 17.2 1291.3 16.7 Z" fill="#f8c8c8"/><path d="M1268.1 17.3 C1269 18.2 1270 18.6 1270.9 18.5 C1274 18.3 1277.5 10.5 1281.1 9.2 C1282 8.9 1282.8 9 1283.4 9.2 C1286 10 1288.5 15 1291.3 16.9 C1292.2 17.5 1293 17.8 1293.9 17.7 C1295.3 17.5 1296.6 16.3 1297.7 14.3" fill="none" stroke="#20b020" stroke-width="1.1"/><path d="M1268.1 16.6 C1272 13 1275.5 6 1278.8 6.2 C1282.5 6.5 1284.2 21.1 1287.1 21.3 C1289.5 21.3 1292 15.5 1295.4 11.3 C1296.4 9.8 1297.2 7.5 1297.7 5.6" fill="none" stroke="#d83030" stroke-width="1.1"/><rect x="1268.1" y="25" width="29.8" height="1" fill="#2020e0"/><rect x="1269" y="21.1" width="3.8" height="3.9" fill="#10c010"/><rect x="1274.1" y="23.2" width="3.6" height="1.8" fill="#e02020"/><rect x="1279.2" y="22.2" width="3.6" height="2.8" fill="#10c010"/><rect x="1284.1" y="23.4" width="3.6" height="1.6" fill="#10c010"/><rect x="1289.2" y="23.2" width="3.6" height="1.8" fill="#e02020"/><rect x="1294.3" y="20.2" width="3.6" height="4.8" fill="#10c010"/><path d="M1278.1 19.8 V16.8 H1276.9 L1279.45 14.1 L1282 16.8 H1280.8 V19.8 Z" fill="#10b010"/><path d="M1289.2 6 H1292 V9 H1293.1 L1290.6 11.9 L1288.1 9 H1289.2 Z" fill="#f02828"/><path d="M1271.9 4.7 H1275 V8.3 H1278 V10.7 H1275 V13.9 H1271.9 V10.7 H1268.7 V8.3 H1271.9 Z" fill="#fbfbfb" stroke="#647886" stroke-width="1.3" stroke-linejoin="round"/></g>
<path d="M1597 0.6 H1583.5 L1575.5 6 V25 L1583.5 30.4 H1597 Z" fill="url(#tabg)" stroke="#6f8898" stroke-width="1.2"/>
<path d="M1578 16.4 L1582 13 V19.9 Z" fill="#000"/>
<path d="M1593 4.7 C1589 4.9 1586.3 6.5 1586.1 11.4 H1589 C1589.2 8 1590.5 6.2 1593 5.9 Z" fill="#ee3c3c"/><path d="M1584.2 11.2 H1590.8 L1587.4 15 Z" fill="#ee3c3c"/>
<path d="M1582.2 25.7 C1586 25.6 1588.8 24 1589 19.4 H1586.1 C1586 22.6 1585 24.6 1582.2 25 Z" fill="#10b010"/><path d="M1584.2 19.6 H1590.8 L1587.4 15.6 Z" fill="#10b010"/>
<path d="M0.4 0.3 L0.4 16.4 L1.4 16.5 L4.6 13.4 L7 18.4 Q7.6 19.2 8.7 18.7 Q9.8 18.1 9.4 17.1 L7.4 12.5 L11.7 12.3 L11.9 11.6 L0.9 0.5 Z" fill="#fff" stroke="#0a0a14" stroke-width="1.1" stroke-linejoin="round"/>
</svg></body></html>
